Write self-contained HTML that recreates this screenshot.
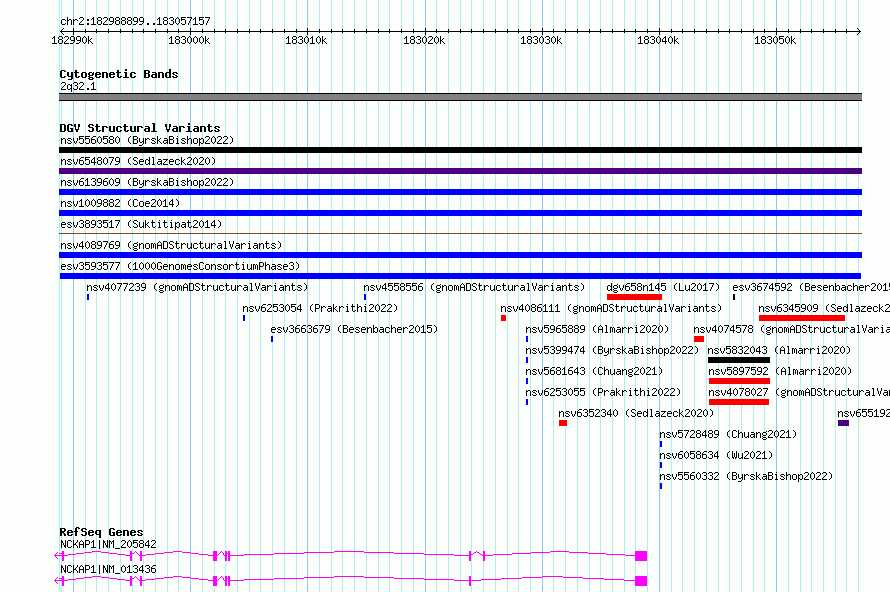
<!DOCTYPE html><html><head><meta charset="utf-8"><style>html,body{margin:0;padding:0;background:#fbfefb;overflow:hidden}svg{display:block}</style></head><body>
<svg width="890" height="592" viewBox="0 0 890 592">
<rect width="890" height="592" fill="#fbfefb"/>
<g shape-rendering="crispEdges">
<path fill="#afeeee" d="M59 0h1v592h-1zM61 0h1v592h-1z"/>
<path fill="#87ceeb" d="M73 0h1v592h-1z"/>
<path fill="#afeeee" d="M85 0h1v592h-1zM96 0h1v592h-1zM108 0h1v592h-1zM120 0h1v592h-1zM132 0h1v592h-1zM143 0h1v592h-1zM155 0h1v592h-1zM167 0h1v592h-1zM178 0h1v592h-1z"/>
<path fill="#87ceeb" d="M190 0h1v592h-1z"/>
<path fill="#afeeee" d="M202 0h1v592h-1zM214 0h1v592h-1zM225 0h1v592h-1zM237 0h1v592h-1zM249 0h1v592h-1zM260 0h1v592h-1zM272 0h1v592h-1zM284 0h1v592h-1zM296 0h1v592h-1z"/>
<path fill="#87ceeb" d="M307 0h1v592h-1z"/>
<path fill="#afeeee" d="M319 0h1v592h-1zM331 0h1v592h-1zM342 0h1v592h-1zM354 0h1v592h-1zM366 0h1v592h-1zM378 0h1v592h-1zM389 0h1v592h-1zM401 0h1v592h-1zM413 0h1v592h-1z"/>
<path fill="#87ceeb" d="M425 0h1v592h-1z"/>
<path fill="#afeeee" d="M436 0h1v592h-1zM448 0h1v592h-1zM460 0h1v592h-1zM471 0h1v592h-1zM483 0h1v592h-1zM495 0h1v592h-1zM507 0h1v592h-1zM518 0h1v592h-1zM530 0h1v592h-1z"/>
<path fill="#87ceeb" d="M542 0h1v592h-1z"/>
<path fill="#afeeee" d="M553 0h1v592h-1zM565 0h1v592h-1zM577 0h1v592h-1zM589 0h1v592h-1zM600 0h1v592h-1zM612 0h1v592h-1zM624 0h1v592h-1zM635 0h1v592h-1zM647 0h1v592h-1z"/>
<path fill="#87ceeb" d="M659 0h1v592h-1z"/>
<path fill="#afeeee" d="M671 0h1v592h-1zM682 0h1v592h-1zM694 0h1v592h-1zM706 0h1v592h-1zM718 0h1v592h-1zM729 0h1v592h-1zM741 0h1v592h-1zM753 0h1v592h-1zM764 0h1v592h-1z"/>
<path fill="#87ceeb" d="M776 0h1v592h-1z"/>
<path fill="#afeeee" d="M788 0h1v592h-1zM800 0h1v592h-1zM811 0h1v592h-1zM823 0h1v592h-1zM835 0h1v592h-1zM846 0h1v592h-1zM858 0h1v592h-1z"/>
<path fill="#000" d="M60 31h801v1h-801zM61 30h1v1h-1zM61 32h1v1h-1zM859 30h1v1h-1zM859 32h1v1h-1zM62 29h1v1h-1zM62 33h1v1h-1zM858 29h1v1h-1zM858 33h1v1h-1zM63 28h1v1h-1zM63 34h1v1h-1zM857 28h1v1h-1zM857 34h1v1h-1zM73 28h1v7h-1zM85 29h1v4h-1zM96 29h1v4h-1zM108 29h1v4h-1zM120 29h1v4h-1zM132 29h1v4h-1zM143 29h1v4h-1zM155 29h1v4h-1zM167 29h1v4h-1zM178 29h1v4h-1zM190 28h1v7h-1zM202 29h1v4h-1zM214 29h1v4h-1zM225 29h1v4h-1zM237 29h1v4h-1zM249 29h1v4h-1zM260 29h1v4h-1zM272 29h1v4h-1zM284 29h1v4h-1zM296 29h1v4h-1zM307 28h1v7h-1zM319 29h1v4h-1zM331 29h1v4h-1zM342 29h1v4h-1zM354 29h1v4h-1zM366 29h1v4h-1zM378 29h1v4h-1zM389 29h1v4h-1zM401 29h1v4h-1zM413 29h1v4h-1zM425 28h1v7h-1zM436 29h1v4h-1zM448 29h1v4h-1zM460 29h1v4h-1zM471 29h1v4h-1zM483 29h1v4h-1zM495 29h1v4h-1zM507 29h1v4h-1zM518 29h1v4h-1zM530 29h1v4h-1zM542 28h1v7h-1zM553 29h1v4h-1zM565 29h1v4h-1zM577 29h1v4h-1zM589 29h1v4h-1zM600 29h1v4h-1zM612 29h1v4h-1zM624 29h1v4h-1zM635 29h1v4h-1zM647 29h1v4h-1zM659 28h1v7h-1zM671 29h1v4h-1zM682 29h1v4h-1zM694 29h1v4h-1zM706 29h1v4h-1zM718 29h1v4h-1zM729 29h1v4h-1zM741 29h1v4h-1zM753 29h1v4h-1zM764 29h1v4h-1zM776 28h1v7h-1zM788 29h1v4h-1zM800 29h1v4h-1zM811 29h1v4h-1zM823 29h1v4h-1zM835 29h1v4h-1zM846 29h1v4h-1zM59 93h803v1h-803z"/>
<path fill="#838083" d="M59 94h803v6h-803z"/>
<path fill="#000" d="M59 100h803v1h-803zM59 147h803v6h-803z"/>
<path fill="#4b0082" d="M59 168h803v6h-803z"/>
<path fill="#0000ff" d="M59 189h803v6h-803zM59 210h803v6h-803z"/>
<path fill="#8b4513" d="M59 233h803v1h-803z"/>
<path fill="#0000ff" d="M59 252h803v6h-803zM60 273h801v6h-801zM87 294h2v6h-2zM364 294h2v6h-2z"/>
<path fill="#ff0000" d="M607 294h55v6h-55z"/>
<path fill="#000" d="M733 294h2v6h-2z"/>
<path fill="#0000ff" d="M243 315h2v6h-2z"/>
<path fill="#ff0000" d="M501 315h5v6h-5zM759 315h86v6h-86z"/>
<path fill="#0000ff" d="M271 336h2v6h-2zM526 336h2v6h-2z"/>
<path fill="#ff0000" d="M694 336h10v6h-10z"/>
<path fill="#0000ff" d="M526 357h2v6h-2z"/>
<path fill="#000" d="M708 357h62v6h-62z"/>
<path fill="#0000ff" d="M526 378h2v6h-2z"/>
<path fill="#ff0000" d="M709 378h61v6h-61z"/>
<path fill="#0000ff" d="M526 399h2v6h-2z"/>
<path fill="#ff0000" d="M709 399h60v6h-60zM559 420h8v6h-8z"/>
<path fill="#4b0082" d="M838 420h11v6h-11z"/>
<path fill="#0000ff" d="M660 441h2v6h-2zM660 462h2v6h-2zM660 483h2v6h-2z"/>
<path fill="#ff00ff" d="M54 555h1v1h-1zM54 555h1v1h-1zM55 554h1v1h-1zM55 556h1v1h-1zM56 553h1v1h-1zM56 557h1v1h-1zM57 552h1v1h-1zM57 558h1v1h-1zM54 555h8v1h-8zM59 553h3v1h-3zM227 553h1v1h-1zM62 551h2v10h-2zM130 551h2v10h-2zM140 551h2v10h-2zM213 551h4v10h-4zM225 551h2v10h-2zM228 551h2v10h-2zM469 551h2v10h-2zM483 551h2v10h-2zM635 551h12v10h-12zM63 555h1v1h-1zM64 555h1v1h-1zM65 555h1v1h-1zM66 555h1v1h-1zM67 555h1v1h-1zM68 554h1v1h-1zM69 554h1v1h-1zM70 554h1v1h-1zM71 554h1v1h-1zM72 554h1v1h-1zM73 554h1v1h-1zM74 554h1v1h-1zM75 554h1v1h-1zM76 553h1v1h-1zM77 553h1v1h-1zM78 553h1v1h-1zM79 553h1v1h-1zM80 553h1v1h-1zM81 553h1v1h-1zM82 553h1v1h-1zM83 553h1v1h-1zM84 552h1v1h-1zM85 552h1v1h-1zM86 552h1v1h-1zM87 552h1v1h-1zM88 552h1v1h-1zM89 552h1v1h-1zM90 552h1v1h-1zM91 552h1v1h-1zM92 551h1v1h-1zM93 551h1v1h-1zM94 551h1v1h-1zM95 551h1v1h-1zM96 551h1v1h-1zM96 551h1v1h-1zM97 551h1v1h-1zM98 551h1v1h-1zM99 551h1v1h-1zM100 551h1v1h-1zM101 552h1v1h-1zM102 552h1v1h-1zM103 552h1v1h-1zM104 552h1v1h-1zM105 552h1v1h-1zM106 552h1v1h-1zM107 552h1v1h-1zM108 552h1v1h-1zM109 553h1v1h-1zM110 553h1v1h-1zM111 553h1v1h-1zM112 553h1v1h-1zM113 553h1v1h-1zM114 553h1v1h-1zM115 553h1v1h-1zM116 553h1v1h-1zM117 554h1v1h-1zM118 554h1v1h-1zM119 554h1v1h-1zM120 554h1v1h-1zM121 554h1v1h-1zM122 554h1v1h-1zM123 554h1v1h-1zM124 554h1v1h-1zM125 555h1v1h-1zM126 555h1v1h-1zM127 555h1v1h-1zM128 555h1v1h-1zM129 555h1v1h-1zM130 555h1v1h-1zM131 554h1v1h-1zM132 553h1v1h-1zM133 553h1v1h-1zM134 552h1v1h-1zM135 551h1v1h-1zM135 551h1v1h-1zM136 552h1v1h-1zM137 553h1v1h-1zM138 554h1v1h-1zM139 555h1v1h-1zM141 555h1v1h-1zM142 555h1v1h-1zM143 555h1v1h-1zM144 555h1v1h-1zM145 555h1v1h-1zM146 554h1v1h-1zM147 554h1v1h-1zM148 554h1v1h-1zM149 554h1v1h-1zM150 554h1v1h-1zM151 554h1v1h-1zM152 554h1v1h-1zM153 554h1v1h-1zM154 554h1v1h-1zM155 553h1v1h-1zM156 553h1v1h-1zM157 553h1v1h-1zM158 553h1v1h-1zM159 553h1v1h-1zM160 553h1v1h-1zM161 553h1v1h-1zM162 553h1v1h-1zM163 553h1v1h-1zM164 552h1v1h-1zM165 552h1v1h-1zM166 552h1v1h-1zM167 552h1v1h-1zM168 552h1v1h-1zM169 552h1v1h-1zM170 552h1v1h-1zM171 552h1v1h-1zM172 552h1v1h-1zM173 551h1v1h-1zM174 551h1v1h-1zM175 551h1v1h-1zM176 551h1v1h-1zM177 551h1v1h-1zM177 551h1v1h-1zM178 551h1v1h-1zM179 551h1v1h-1zM180 551h1v1h-1zM181 551h1v1h-1zM182 552h1v1h-1zM183 552h1v1h-1zM184 552h1v1h-1zM185 552h1v1h-1zM186 552h1v1h-1zM187 552h1v1h-1zM188 552h1v1h-1zM189 552h1v1h-1zM190 552h1v1h-1zM191 553h1v1h-1zM192 553h1v1h-1zM193 553h1v1h-1zM194 553h1v1h-1zM195 553h1v1h-1zM196 553h1v1h-1zM197 553h1v1h-1zM198 553h1v1h-1zM199 554h1v1h-1zM200 554h1v1h-1zM201 554h1v1h-1zM202 554h1v1h-1zM203 554h1v1h-1zM204 554h1v1h-1zM205 554h1v1h-1zM206 554h1v1h-1zM207 554h1v1h-1zM208 555h1v1h-1zM209 555h1v1h-1zM210 555h1v1h-1zM211 555h1v1h-1zM212 555h1v1h-1zM217 555h1v1h-1zM218 554h1v1h-1zM219 553h1v1h-1zM220 552h1v1h-1zM221 551h1v1h-1zM221 551h1v1h-1zM222 552h1v1h-1zM223 553h1v1h-1zM223 554h1v1h-1zM224 555h1v1h-1zM229 555h1v1h-1zM230 555h1v1h-1zM231 555h1v1h-1zM232 555h1v1h-1zM233 555h1v1h-1zM234 555h1v1h-1zM235 555h1v1h-1zM236 555h1v1h-1zM237 555h1v1h-1zM238 555h1v1h-1zM239 555h1v1h-1zM240 555h1v1h-1zM241 555h1v1h-1zM242 555h1v1h-1zM243 555h1v1h-1zM244 554h1v1h-1zM245 554h1v1h-1zM246 554h1v1h-1zM247 554h1v1h-1zM248 554h1v1h-1zM249 554h1v1h-1zM250 554h1v1h-1zM251 554h1v1h-1zM252 554h1v1h-1zM253 554h1v1h-1zM254 554h1v1h-1zM255 554h1v1h-1zM256 554h1v1h-1zM257 554h1v1h-1zM258 554h1v1h-1zM259 554h1v1h-1zM260 554h1v1h-1zM261 554h1v1h-1zM262 554h1v1h-1zM263 554h1v1h-1zM264 554h1v1h-1zM265 554h1v1h-1zM266 554h1v1h-1zM267 554h1v1h-1zM268 554h1v1h-1zM269 554h1v1h-1zM270 554h1v1h-1zM271 554h1v1h-1zM272 554h1v1h-1zM273 554h1v1h-1zM274 553h1v1h-1zM275 553h1v1h-1zM276 553h1v1h-1zM277 553h1v1h-1zM278 553h1v1h-1zM279 553h1v1h-1zM280 553h1v1h-1zM281 553h1v1h-1zM282 553h1v1h-1zM283 553h1v1h-1zM284 553h1v1h-1zM285 553h1v1h-1zM286 553h1v1h-1zM287 553h1v1h-1zM288 553h1v1h-1zM289 553h1v1h-1zM290 553h1v1h-1zM291 553h1v1h-1zM292 553h1v1h-1zM293 553h1v1h-1zM294 553h1v1h-1zM295 553h1v1h-1zM296 553h1v1h-1zM297 553h1v1h-1zM298 553h1v1h-1zM299 553h1v1h-1zM300 553h1v1h-1zM301 553h1v1h-1zM302 553h1v1h-1zM303 553h1v1h-1zM304 552h1v1h-1zM305 552h1v1h-1zM306 552h1v1h-1zM307 552h1v1h-1zM308 552h1v1h-1zM309 552h1v1h-1zM310 552h1v1h-1zM311 552h1v1h-1zM312 552h1v1h-1zM313 552h1v1h-1zM314 552h1v1h-1zM315 552h1v1h-1zM316 552h1v1h-1zM317 552h1v1h-1zM318 552h1v1h-1zM319 552h1v1h-1zM320 552h1v1h-1zM321 552h1v1h-1zM322 552h1v1h-1zM323 552h1v1h-1zM324 552h1v1h-1zM325 552h1v1h-1zM326 552h1v1h-1zM327 552h1v1h-1zM328 552h1v1h-1zM329 552h1v1h-1zM330 552h1v1h-1zM331 552h1v1h-1zM332 552h1v1h-1zM333 552h1v1h-1zM334 551h1v1h-1zM335 551h1v1h-1zM336 551h1v1h-1zM337 551h1v1h-1zM338 551h1v1h-1zM339 551h1v1h-1zM340 551h1v1h-1zM341 551h1v1h-1zM342 551h1v1h-1zM343 551h1v1h-1zM344 551h1v1h-1zM345 551h1v1h-1zM346 551h1v1h-1zM347 551h1v1h-1zM348 551h1v1h-1zM349 551h1v1h-1zM349 551h1v1h-1zM350 551h1v1h-1zM351 551h1v1h-1zM352 551h1v1h-1zM353 551h1v1h-1zM354 551h1v1h-1zM355 551h1v1h-1zM356 551h1v1h-1zM357 551h1v1h-1zM358 551h1v1h-1zM359 551h1v1h-1zM360 551h1v1h-1zM361 551h1v1h-1zM362 551h1v1h-1zM363 551h1v1h-1zM364 552h1v1h-1zM365 552h1v1h-1zM366 552h1v1h-1zM367 552h1v1h-1zM368 552h1v1h-1zM369 552h1v1h-1zM370 552h1v1h-1zM371 552h1v1h-1zM372 552h1v1h-1zM373 552h1v1h-1zM374 552h1v1h-1zM375 552h1v1h-1zM376 552h1v1h-1zM377 552h1v1h-1zM378 552h1v1h-1zM379 552h1v1h-1zM380 552h1v1h-1zM381 552h1v1h-1zM382 552h1v1h-1zM383 552h1v1h-1zM384 552h1v1h-1zM385 552h1v1h-1zM386 552h1v1h-1zM387 552h1v1h-1zM388 552h1v1h-1zM389 552h1v1h-1zM390 552h1v1h-1zM391 552h1v1h-1zM392 552h1v1h-1zM393 552h1v1h-1zM394 553h1v1h-1zM395 553h1v1h-1zM396 553h1v1h-1zM397 553h1v1h-1zM398 553h1v1h-1zM399 553h1v1h-1zM400 553h1v1h-1zM401 553h1v1h-1zM402 553h1v1h-1zM403 553h1v1h-1zM404 553h1v1h-1zM405 553h1v1h-1zM406 553h1v1h-1zM407 553h1v1h-1zM408 553h1v1h-1zM409 553h1v1h-1zM410 553h1v1h-1zM411 553h1v1h-1zM412 553h1v1h-1zM413 553h1v1h-1zM414 553h1v1h-1zM415 553h1v1h-1zM416 553h1v1h-1zM417 553h1v1h-1zM418 553h1v1h-1zM419 553h1v1h-1zM420 553h1v1h-1zM421 553h1v1h-1zM422 553h1v1h-1zM423 553h1v1h-1zM424 554h1v1h-1zM425 554h1v1h-1zM426 554h1v1h-1zM427 554h1v1h-1zM428 554h1v1h-1zM429 554h1v1h-1zM430 554h1v1h-1zM431 554h1v1h-1zM432 554h1v1h-1zM433 554h1v1h-1zM434 554h1v1h-1zM435 554h1v1h-1zM436 554h1v1h-1zM437 554h1v1h-1zM438 554h1v1h-1zM439 554h1v1h-1zM440 554h1v1h-1zM441 554h1v1h-1zM442 554h1v1h-1zM443 554h1v1h-1zM444 554h1v1h-1zM445 554h1v1h-1zM446 554h1v1h-1zM447 554h1v1h-1zM448 554h1v1h-1zM449 554h1v1h-1zM450 554h1v1h-1zM451 554h1v1h-1zM452 554h1v1h-1zM453 554h1v1h-1zM454 555h1v1h-1zM455 555h1v1h-1zM456 555h1v1h-1zM457 555h1v1h-1zM458 555h1v1h-1zM459 555h1v1h-1zM460 555h1v1h-1zM461 555h1v1h-1zM462 555h1v1h-1zM463 555h1v1h-1zM464 555h1v1h-1zM465 555h1v1h-1zM466 555h1v1h-1zM467 555h1v1h-1zM468 555h1v1h-1zM470 555h1v1h-1zM471 554h1v1h-1zM472 554h1v1h-1zM473 553h1v1h-1zM474 552h1v1h-1zM475 552h1v1h-1zM476 551h1v1h-1zM476 551h1v1h-1zM477 552h1v1h-1zM478 552h1v1h-1zM479 553h1v1h-1zM480 554h1v1h-1zM481 554h1v1h-1zM482 555h1v1h-1zM483 555h1v1h-1zM484 555h1v1h-1zM485 555h1v1h-1zM486 555h1v1h-1zM487 555h1v1h-1zM488 555h1v1h-1zM489 555h1v1h-1zM490 555h1v1h-1zM491 555h1v1h-1zM492 555h1v1h-1zM493 554h1v1h-1zM494 554h1v1h-1zM495 554h1v1h-1zM496 554h1v1h-1zM497 554h1v1h-1zM498 554h1v1h-1zM499 554h1v1h-1zM500 554h1v1h-1zM501 554h1v1h-1zM502 554h1v1h-1zM503 554h1v1h-1zM504 554h1v1h-1zM505 554h1v1h-1zM506 554h1v1h-1zM507 554h1v1h-1zM508 554h1v1h-1zM509 554h1v1h-1zM510 554h1v1h-1zM511 554h1v1h-1zM512 553h1v1h-1zM513 553h1v1h-1zM514 553h1v1h-1zM515 553h1v1h-1zM516 553h1v1h-1zM517 553h1v1h-1zM518 553h1v1h-1zM519 553h1v1h-1zM520 553h1v1h-1zM521 553h1v1h-1zM522 553h1v1h-1zM523 553h1v1h-1zM524 553h1v1h-1zM525 553h1v1h-1zM526 553h1v1h-1zM527 553h1v1h-1zM528 553h1v1h-1zM529 553h1v1h-1zM530 553h1v1h-1zM531 552h1v1h-1zM532 552h1v1h-1zM533 552h1v1h-1zM534 552h1v1h-1zM535 552h1v1h-1zM536 552h1v1h-1zM537 552h1v1h-1zM538 552h1v1h-1zM539 552h1v1h-1zM540 552h1v1h-1zM541 552h1v1h-1zM542 552h1v1h-1zM543 552h1v1h-1zM544 552h1v1h-1zM545 552h1v1h-1zM546 552h1v1h-1zM547 552h1v1h-1zM548 552h1v1h-1zM549 552h1v1h-1zM550 551h1v1h-1zM551 551h1v1h-1zM552 551h1v1h-1zM553 551h1v1h-1zM554 551h1v1h-1zM555 551h1v1h-1zM556 551h1v1h-1zM557 551h1v1h-1zM558 551h1v1h-1zM559 551h1v1h-1zM559 551h1v1h-1zM560 551h1v1h-1zM561 551h1v1h-1zM562 551h1v1h-1zM563 551h1v1h-1zM564 551h1v1h-1zM565 551h1v1h-1zM566 551h1v1h-1zM567 551h1v1h-1zM568 551h1v1h-1zM569 552h1v1h-1zM570 552h1v1h-1zM571 552h1v1h-1zM572 552h1v1h-1zM573 552h1v1h-1zM574 552h1v1h-1zM575 552h1v1h-1zM576 552h1v1h-1zM577 552h1v1h-1zM578 552h1v1h-1zM579 552h1v1h-1zM580 552h1v1h-1zM581 552h1v1h-1zM582 552h1v1h-1zM583 552h1v1h-1zM584 552h1v1h-1zM585 552h1v1h-1zM586 552h1v1h-1zM587 552h1v1h-1zM588 553h1v1h-1zM589 553h1v1h-1zM590 553h1v1h-1zM591 553h1v1h-1zM592 553h1v1h-1zM593 553h1v1h-1zM594 553h1v1h-1zM595 553h1v1h-1zM596 553h1v1h-1zM597 553h1v1h-1zM598 553h1v1h-1zM599 553h1v1h-1zM600 553h1v1h-1zM601 553h1v1h-1zM602 553h1v1h-1zM603 553h1v1h-1zM604 553h1v1h-1zM605 553h1v1h-1zM606 554h1v1h-1zM607 554h1v1h-1zM608 554h1v1h-1zM609 554h1v1h-1zM610 554h1v1h-1zM611 554h1v1h-1zM612 554h1v1h-1zM613 554h1v1h-1zM614 554h1v1h-1zM615 554h1v1h-1zM616 554h1v1h-1zM617 554h1v1h-1zM618 554h1v1h-1zM619 554h1v1h-1zM620 554h1v1h-1zM621 554h1v1h-1zM622 554h1v1h-1zM623 554h1v1h-1zM624 554h1v1h-1zM625 555h1v1h-1zM626 555h1v1h-1zM627 555h1v1h-1zM628 555h1v1h-1zM629 555h1v1h-1zM630 555h1v1h-1zM631 555h1v1h-1zM632 555h1v1h-1zM633 555h1v1h-1zM634 555h1v1h-1zM54 580h1v1h-1zM54 580h1v1h-1zM55 579h1v1h-1zM55 581h1v1h-1zM56 578h1v1h-1zM56 582h1v1h-1zM57 577h1v1h-1zM57 583h1v1h-1zM54 580h8v1h-8zM59 578h3v1h-3zM227 578h1v1h-1zM62 576h2v10h-2zM130 576h2v10h-2zM140 576h2v10h-2zM213 576h4v10h-4zM225 576h2v10h-2zM228 576h2v10h-2zM469 576h2v10h-2zM635 576h12v10h-12zM63 580h1v1h-1zM64 580h1v1h-1zM65 580h1v1h-1zM66 580h1v1h-1zM67 580h1v1h-1zM68 579h1v1h-1zM69 579h1v1h-1zM70 579h1v1h-1zM71 579h1v1h-1zM72 579h1v1h-1zM73 579h1v1h-1zM74 579h1v1h-1zM75 579h1v1h-1zM76 578h1v1h-1zM77 578h1v1h-1zM78 578h1v1h-1zM79 578h1v1h-1zM80 578h1v1h-1zM81 578h1v1h-1zM82 578h1v1h-1zM83 578h1v1h-1zM84 577h1v1h-1zM85 577h1v1h-1zM86 577h1v1h-1zM87 577h1v1h-1zM88 577h1v1h-1zM89 577h1v1h-1zM90 577h1v1h-1zM91 577h1v1h-1zM92 576h1v1h-1zM93 576h1v1h-1zM94 576h1v1h-1zM95 576h1v1h-1zM96 576h1v1h-1zM96 576h1v1h-1zM97 576h1v1h-1zM98 576h1v1h-1zM99 576h1v1h-1zM100 576h1v1h-1zM101 577h1v1h-1zM102 577h1v1h-1zM103 577h1v1h-1zM104 577h1v1h-1zM105 577h1v1h-1zM106 577h1v1h-1zM107 577h1v1h-1zM108 577h1v1h-1zM109 578h1v1h-1zM110 578h1v1h-1zM111 578h1v1h-1zM112 578h1v1h-1zM113 578h1v1h-1zM114 578h1v1h-1zM115 578h1v1h-1zM116 578h1v1h-1zM117 579h1v1h-1zM118 579h1v1h-1zM119 579h1v1h-1zM120 579h1v1h-1zM121 579h1v1h-1zM122 579h1v1h-1zM123 579h1v1h-1zM124 579h1v1h-1zM125 580h1v1h-1zM126 580h1v1h-1zM127 580h1v1h-1zM128 580h1v1h-1zM129 580h1v1h-1zM130 580h1v1h-1zM131 579h1v1h-1zM132 578h1v1h-1zM133 578h1v1h-1zM134 577h1v1h-1zM135 576h1v1h-1zM135 576h1v1h-1zM136 577h1v1h-1zM137 578h1v1h-1zM138 579h1v1h-1zM139 580h1v1h-1zM141 580h1v1h-1zM142 580h1v1h-1zM143 580h1v1h-1zM144 580h1v1h-1zM145 580h1v1h-1zM146 579h1v1h-1zM147 579h1v1h-1zM148 579h1v1h-1zM149 579h1v1h-1zM150 579h1v1h-1zM151 579h1v1h-1zM152 579h1v1h-1zM153 579h1v1h-1zM154 579h1v1h-1zM155 578h1v1h-1zM156 578h1v1h-1zM157 578h1v1h-1zM158 578h1v1h-1zM159 578h1v1h-1zM160 578h1v1h-1zM161 578h1v1h-1zM162 578h1v1h-1zM163 578h1v1h-1zM164 577h1v1h-1zM165 577h1v1h-1zM166 577h1v1h-1zM167 577h1v1h-1zM168 577h1v1h-1zM169 577h1v1h-1zM170 577h1v1h-1zM171 577h1v1h-1zM172 577h1v1h-1zM173 576h1v1h-1zM174 576h1v1h-1zM175 576h1v1h-1zM176 576h1v1h-1zM177 576h1v1h-1zM177 576h1v1h-1zM178 576h1v1h-1zM179 576h1v1h-1zM180 576h1v1h-1zM181 576h1v1h-1zM182 577h1v1h-1zM183 577h1v1h-1zM184 577h1v1h-1zM185 577h1v1h-1zM186 577h1v1h-1zM187 577h1v1h-1zM188 577h1v1h-1zM189 577h1v1h-1zM190 577h1v1h-1zM191 578h1v1h-1zM192 578h1v1h-1zM193 578h1v1h-1zM194 578h1v1h-1zM195 578h1v1h-1zM196 578h1v1h-1zM197 578h1v1h-1zM198 578h1v1h-1zM199 579h1v1h-1zM200 579h1v1h-1zM201 579h1v1h-1zM202 579h1v1h-1zM203 579h1v1h-1zM204 579h1v1h-1zM205 579h1v1h-1zM206 579h1v1h-1zM207 579h1v1h-1zM208 580h1v1h-1zM209 580h1v1h-1zM210 580h1v1h-1zM211 580h1v1h-1zM212 580h1v1h-1zM217 580h1v1h-1zM218 579h1v1h-1zM219 578h1v1h-1zM220 577h1v1h-1zM221 576h1v1h-1zM221 576h1v1h-1zM222 577h1v1h-1zM223 578h1v1h-1zM223 579h1v1h-1zM224 580h1v1h-1zM229 580h1v1h-1zM230 580h1v1h-1zM231 580h1v1h-1zM232 580h1v1h-1zM233 580h1v1h-1zM234 580h1v1h-1zM235 580h1v1h-1zM236 580h1v1h-1zM237 580h1v1h-1zM238 580h1v1h-1zM239 580h1v1h-1zM240 580h1v1h-1zM241 580h1v1h-1zM242 580h1v1h-1zM243 580h1v1h-1zM244 579h1v1h-1zM245 579h1v1h-1zM246 579h1v1h-1zM247 579h1v1h-1zM248 579h1v1h-1zM249 579h1v1h-1zM250 579h1v1h-1zM251 579h1v1h-1zM252 579h1v1h-1zM253 579h1v1h-1zM254 579h1v1h-1zM255 579h1v1h-1zM256 579h1v1h-1zM257 579h1v1h-1zM258 579h1v1h-1zM259 579h1v1h-1zM260 579h1v1h-1zM261 579h1v1h-1zM262 579h1v1h-1zM263 579h1v1h-1zM264 579h1v1h-1zM265 579h1v1h-1zM266 579h1v1h-1zM267 579h1v1h-1zM268 579h1v1h-1zM269 579h1v1h-1zM270 579h1v1h-1zM271 579h1v1h-1zM272 579h1v1h-1zM273 579h1v1h-1zM274 578h1v1h-1zM275 578h1v1h-1zM276 578h1v1h-1zM277 578h1v1h-1zM278 578h1v1h-1zM279 578h1v1h-1zM280 578h1v1h-1zM281 578h1v1h-1zM282 578h1v1h-1zM283 578h1v1h-1zM284 578h1v1h-1zM285 578h1v1h-1zM286 578h1v1h-1zM287 578h1v1h-1zM288 578h1v1h-1zM289 578h1v1h-1zM290 578h1v1h-1zM291 578h1v1h-1zM292 578h1v1h-1zM293 578h1v1h-1zM294 578h1v1h-1zM295 578h1v1h-1zM296 578h1v1h-1zM297 578h1v1h-1zM298 578h1v1h-1zM299 578h1v1h-1zM300 578h1v1h-1zM301 578h1v1h-1zM302 578h1v1h-1zM303 578h1v1h-1zM304 577h1v1h-1zM305 577h1v1h-1zM306 577h1v1h-1zM307 577h1v1h-1zM308 577h1v1h-1zM309 577h1v1h-1zM310 577h1v1h-1zM311 577h1v1h-1zM312 577h1v1h-1zM313 577h1v1h-1zM314 577h1v1h-1zM315 577h1v1h-1zM316 577h1v1h-1zM317 577h1v1h-1zM318 577h1v1h-1zM319 577h1v1h-1zM320 577h1v1h-1zM321 577h1v1h-1zM322 577h1v1h-1zM323 577h1v1h-1zM324 577h1v1h-1zM325 577h1v1h-1zM326 577h1v1h-1zM327 577h1v1h-1zM328 577h1v1h-1zM329 577h1v1h-1zM330 577h1v1h-1zM331 577h1v1h-1zM332 577h1v1h-1zM333 577h1v1h-1zM334 576h1v1h-1zM335 576h1v1h-1zM336 576h1v1h-1zM337 576h1v1h-1zM338 576h1v1h-1zM339 576h1v1h-1zM340 576h1v1h-1zM341 576h1v1h-1zM342 576h1v1h-1zM343 576h1v1h-1zM344 576h1v1h-1zM345 576h1v1h-1zM346 576h1v1h-1zM347 576h1v1h-1zM348 576h1v1h-1zM349 576h1v1h-1zM349 576h1v1h-1zM350 576h1v1h-1zM351 576h1v1h-1zM352 576h1v1h-1zM353 576h1v1h-1zM354 576h1v1h-1zM355 576h1v1h-1zM356 576h1v1h-1zM357 576h1v1h-1zM358 576h1v1h-1zM359 576h1v1h-1zM360 576h1v1h-1zM361 576h1v1h-1zM362 576h1v1h-1zM363 576h1v1h-1zM364 577h1v1h-1zM365 577h1v1h-1zM366 577h1v1h-1zM367 577h1v1h-1zM368 577h1v1h-1zM369 577h1v1h-1zM370 577h1v1h-1zM371 577h1v1h-1zM372 577h1v1h-1zM373 577h1v1h-1zM374 577h1v1h-1zM375 577h1v1h-1zM376 577h1v1h-1zM377 577h1v1h-1zM378 577h1v1h-1zM379 577h1v1h-1zM380 577h1v1h-1zM381 577h1v1h-1zM382 577h1v1h-1zM383 577h1v1h-1zM384 577h1v1h-1zM385 577h1v1h-1zM386 577h1v1h-1zM387 577h1v1h-1zM388 577h1v1h-1zM389 577h1v1h-1zM390 577h1v1h-1zM391 577h1v1h-1zM392 577h1v1h-1zM393 577h1v1h-1zM394 578h1v1h-1zM395 578h1v1h-1zM396 578h1v1h-1zM397 578h1v1h-1zM398 578h1v1h-1zM399 578h1v1h-1zM400 578h1v1h-1zM401 578h1v1h-1zM402 578h1v1h-1zM403 578h1v1h-1zM404 578h1v1h-1zM405 578h1v1h-1zM406 578h1v1h-1zM407 578h1v1h-1zM408 578h1v1h-1zM409 578h1v1h-1zM410 578h1v1h-1zM411 578h1v1h-1zM412 578h1v1h-1zM413 578h1v1h-1zM414 578h1v1h-1zM415 578h1v1h-1zM416 578h1v1h-1zM417 578h1v1h-1zM418 578h1v1h-1zM419 578h1v1h-1zM420 578h1v1h-1zM421 578h1v1h-1zM422 578h1v1h-1zM423 578h1v1h-1zM424 579h1v1h-1zM425 579h1v1h-1zM426 579h1v1h-1zM427 579h1v1h-1zM428 579h1v1h-1zM429 579h1v1h-1zM430 579h1v1h-1zM431 579h1v1h-1zM432 579h1v1h-1zM433 579h1v1h-1zM434 579h1v1h-1zM435 579h1v1h-1zM436 579h1v1h-1zM437 579h1v1h-1zM438 579h1v1h-1zM439 579h1v1h-1zM440 579h1v1h-1zM441 579h1v1h-1zM442 579h1v1h-1zM443 579h1v1h-1zM444 579h1v1h-1zM445 579h1v1h-1zM446 579h1v1h-1zM447 579h1v1h-1zM448 579h1v1h-1zM449 579h1v1h-1zM450 579h1v1h-1zM451 579h1v1h-1zM452 579h1v1h-1zM453 579h1v1h-1zM454 580h1v1h-1zM455 580h1v1h-1zM456 580h1v1h-1zM457 580h1v1h-1zM458 580h1v1h-1zM459 580h1v1h-1zM460 580h1v1h-1zM461 580h1v1h-1zM462 580h1v1h-1zM463 580h1v1h-1zM464 580h1v1h-1zM465 580h1v1h-1zM466 580h1v1h-1zM467 580h1v1h-1zM468 580h1v1h-1zM470 580h1v1h-1zM471 580h1v1h-1zM472 580h1v1h-1zM473 580h1v1h-1zM474 580h1v1h-1zM475 580h1v1h-1zM476 580h1v1h-1zM477 580h1v1h-1zM478 580h1v1h-1zM479 580h1v1h-1zM480 580h1v1h-1zM481 579h1v1h-1zM482 579h1v1h-1zM483 579h1v1h-1zM484 579h1v1h-1zM485 579h1v1h-1zM486 579h1v1h-1zM487 579h1v1h-1zM488 579h1v1h-1zM489 579h1v1h-1zM490 579h1v1h-1zM491 579h1v1h-1zM492 579h1v1h-1zM493 579h1v1h-1zM494 579h1v1h-1zM495 579h1v1h-1zM496 579h1v1h-1zM497 579h1v1h-1zM498 579h1v1h-1zM499 579h1v1h-1zM500 579h1v1h-1zM501 578h1v1h-1zM502 578h1v1h-1zM503 578h1v1h-1zM504 578h1v1h-1zM505 578h1v1h-1zM506 578h1v1h-1zM507 578h1v1h-1zM508 578h1v1h-1zM509 578h1v1h-1zM510 578h1v1h-1zM511 578h1v1h-1zM512 578h1v1h-1zM513 578h1v1h-1zM514 578h1v1h-1zM515 578h1v1h-1zM516 578h1v1h-1zM517 578h1v1h-1zM518 578h1v1h-1zM519 578h1v1h-1zM520 578h1v1h-1zM521 578h1v1h-1zM522 577h1v1h-1zM523 577h1v1h-1zM524 577h1v1h-1zM525 577h1v1h-1zM526 577h1v1h-1zM527 577h1v1h-1zM528 577h1v1h-1zM529 577h1v1h-1zM530 577h1v1h-1zM531 577h1v1h-1zM532 577h1v1h-1zM533 577h1v1h-1zM534 577h1v1h-1zM535 577h1v1h-1zM536 577h1v1h-1zM537 577h1v1h-1zM538 577h1v1h-1zM539 577h1v1h-1zM540 577h1v1h-1zM541 577h1v1h-1zM542 576h1v1h-1zM543 576h1v1h-1zM544 576h1v1h-1zM545 576h1v1h-1zM546 576h1v1h-1zM547 576h1v1h-1zM548 576h1v1h-1zM549 576h1v1h-1zM550 576h1v1h-1zM551 576h1v1h-1zM552 576h1v1h-1zM552 576h1v1h-1zM553 576h1v1h-1zM554 576h1v1h-1zM555 576h1v1h-1zM556 576h1v1h-1zM557 576h1v1h-1zM558 576h1v1h-1zM559 576h1v1h-1zM560 576h1v1h-1zM561 576h1v1h-1zM562 576h1v1h-1zM563 577h1v1h-1zM564 577h1v1h-1zM565 577h1v1h-1zM566 577h1v1h-1zM567 577h1v1h-1zM568 577h1v1h-1zM569 577h1v1h-1zM570 577h1v1h-1zM571 577h1v1h-1zM572 577h1v1h-1zM573 577h1v1h-1zM574 577h1v1h-1zM575 577h1v1h-1zM576 577h1v1h-1zM577 577h1v1h-1zM578 577h1v1h-1zM579 577h1v1h-1zM580 577h1v1h-1zM581 577h1v1h-1zM582 577h1v1h-1zM583 578h1v1h-1zM584 578h1v1h-1zM585 578h1v1h-1zM586 578h1v1h-1zM587 578h1v1h-1zM588 578h1v1h-1zM589 578h1v1h-1zM590 578h1v1h-1zM591 578h1v1h-1zM592 578h1v1h-1zM593 578h1v1h-1zM594 578h1v1h-1zM595 578h1v1h-1zM596 578h1v1h-1zM597 578h1v1h-1zM598 578h1v1h-1zM599 578h1v1h-1zM600 578h1v1h-1zM601 578h1v1h-1zM602 578h1v1h-1zM603 578h1v1h-1zM604 579h1v1h-1zM605 579h1v1h-1zM606 579h1v1h-1zM607 579h1v1h-1zM608 579h1v1h-1zM609 579h1v1h-1zM610 579h1v1h-1zM611 579h1v1h-1zM612 579h1v1h-1zM613 579h1v1h-1zM614 579h1v1h-1zM615 579h1v1h-1zM616 579h1v1h-1zM617 579h1v1h-1zM618 579h1v1h-1zM619 579h1v1h-1zM620 579h1v1h-1zM621 579h1v1h-1zM622 579h1v1h-1zM623 579h1v1h-1zM624 580h1v1h-1zM625 580h1v1h-1zM626 580h1v1h-1zM627 580h1v1h-1zM628 580h1v1h-1zM629 580h1v1h-1zM630 580h1v1h-1zM631 580h1v1h-1zM632 580h1v1h-1zM633 580h1v1h-1zM634 580h1v1h-1z"/>
</g>
<defs>
<path id="r0" d="M3 3h1v1h-1zM2 4h1v1h-1zM1 5h1v1h-1zM1 6h1v1h-1zM1 7h1v1h-1zM1 8h1v1h-1zM2 9h1v1h-1zM3 10h1v1h-1z"/>
<path id="r1" d="M1 3h1v1h-1zM2 4h1v1h-1zM3 5h1v1h-1zM3 6h1v1h-1zM3 7h1v1h-1zM3 8h1v1h-1zM2 9h1v1h-1zM1 10h1v1h-1z"/>
<path id="r2" d="M2 9h2v1h-2zM2 10h2v1h-2z"/>
<path id="r3" d="M2 3h1v1h-1zM1 4h1v1h-1zM3 4h1v1h-1zM0 5h1v1h-1zM4 5h1v1h-1zM0 6h1v1h-1zM4 6h1v1h-1zM0 7h1v1h-1zM4 7h1v1h-1zM0 8h1v1h-1zM4 8h1v1h-1zM1 9h1v1h-1zM3 9h1v1h-1zM2 10h1v1h-1z"/>
<path id="r4" d="M2 3h1v1h-1zM1 4h2v1h-2zM0 5h1v1h-1zM2 5h1v1h-1zM2 6h1v1h-1zM2 7h1v1h-1zM2 8h1v1h-1zM2 9h1v1h-1zM0 10h5v1h-5z"/>
<path id="r5" d="M1 3h3v1h-3zM0 4h1v1h-1zM4 4h1v1h-1zM4 5h1v1h-1zM3 6h1v1h-1zM2 7h1v1h-1zM1 8h1v1h-1zM0 9h1v1h-1zM0 10h5v1h-5z"/>
<path id="r6" d="M1 3h3v1h-3zM0 4h1v1h-1zM4 4h1v1h-1zM4 5h1v1h-1zM2 6h2v1h-2zM4 7h1v1h-1zM4 8h1v1h-1zM0 9h1v1h-1zM4 9h1v1h-1zM1 10h3v1h-3z"/>
<path id="r7" d="M3 3h1v1h-1zM2 4h2v1h-2zM1 5h1v1h-1zM3 5h1v1h-1zM0 6h1v1h-1zM3 6h1v1h-1zM0 7h1v1h-1zM3 7h1v1h-1zM0 8h5v1h-5zM3 9h1v1h-1zM3 10h1v1h-1z"/>
<path id="r8" d="M0 3h5v1h-5zM0 4h1v1h-1zM0 5h4v1h-4zM0 6h1v1h-1zM4 6h1v1h-1zM4 7h1v1h-1zM4 8h1v1h-1zM0 9h1v1h-1zM4 9h1v1h-1zM1 10h3v1h-3z"/>
<path id="r9" d="M2 3h3v1h-3zM1 4h1v1h-1zM0 5h1v1h-1zM0 6h4v1h-4zM0 7h1v1h-1zM4 7h1v1h-1zM0 8h1v1h-1zM4 8h1v1h-1zM0 9h1v1h-1zM4 9h1v1h-1zM1 10h3v1h-3z"/>
<path id="r10" d="M0 3h5v1h-5zM4 4h1v1h-1zM3 5h1v1h-1zM3 6h1v1h-1zM2 7h1v1h-1zM2 8h1v1h-1zM1 9h1v1h-1zM1 10h1v1h-1z"/>
<path id="r11" d="M1 3h3v1h-3zM0 4h1v1h-1zM4 4h1v1h-1zM0 5h1v1h-1zM4 5h1v1h-1zM1 6h3v1h-3zM0 7h1v1h-1zM4 7h1v1h-1zM0 8h1v1h-1zM4 8h1v1h-1zM0 9h1v1h-1zM4 9h1v1h-1zM1 10h3v1h-3z"/>
<path id="r12" d="M1 3h3v1h-3zM0 4h1v1h-1zM4 4h1v1h-1zM0 5h1v1h-1zM4 5h1v1h-1zM0 6h1v1h-1zM4 6h1v1h-1zM1 7h4v1h-4zM4 8h1v1h-1zM3 9h1v1h-1zM0 10h3v1h-3z"/>
<path id="r13" d="M2 5h2v1h-2zM2 6h2v1h-2zM2 9h2v1h-2zM2 10h2v1h-2z"/>
<path id="r14" d="M2 3h1v1h-1zM1 4h1v1h-1zM3 4h1v1h-1zM0 5h1v1h-1zM4 5h1v1h-1zM0 6h1v1h-1zM4 6h1v1h-1zM0 7h5v1h-5zM0 8h1v1h-1zM4 8h1v1h-1zM0 9h1v1h-1zM4 9h1v1h-1zM0 10h1v1h-1zM4 10h1v1h-1z"/>
<path id="r15" d="M0 3h4v1h-4zM0 4h1v1h-1zM4 4h1v1h-1zM0 5h1v1h-1zM4 5h1v1h-1zM0 6h4v1h-4zM0 7h1v1h-1zM4 7h1v1h-1zM0 8h1v1h-1zM4 8h1v1h-1zM0 9h1v1h-1zM4 9h1v1h-1zM0 10h4v1h-4z"/>
<path id="b16" d="M0 3h5v1h-5zM0 4h2v1h-2zM4 4h2v1h-2zM0 5h2v1h-2zM4 5h2v1h-2zM0 6h5v1h-5zM0 7h2v1h-2zM4 7h2v1h-2zM0 8h2v1h-2zM4 8h2v1h-2zM0 9h2v1h-2zM4 9h2v1h-2zM0 10h5v1h-5z"/>
<path id="r17" d="M1 3h3v1h-3zM0 4h1v1h-1zM4 4h1v1h-1zM0 5h1v1h-1zM0 6h1v1h-1zM0 7h1v1h-1zM0 8h1v1h-1zM0 9h1v1h-1zM4 9h1v1h-1zM1 10h3v1h-3z"/>
<path id="b18" d="M1 3h4v1h-4zM0 4h2v1h-2zM4 4h2v1h-2zM0 5h2v1h-2zM0 6h2v1h-2zM0 7h2v1h-2zM0 8h2v1h-2zM0 9h2v1h-2zM4 9h2v1h-2zM1 10h4v1h-4z"/>
<path id="r19" d="M0 3h4v1h-4zM0 4h1v1h-1zM4 4h1v1h-1zM0 5h1v1h-1zM4 5h1v1h-1zM0 6h1v1h-1zM4 6h1v1h-1zM0 7h1v1h-1zM4 7h1v1h-1zM0 8h1v1h-1zM4 8h1v1h-1zM0 9h1v1h-1zM4 9h1v1h-1zM0 10h4v1h-4z"/>
<path id="b20" d="M0 3h5v1h-5zM0 4h2v1h-2zM4 4h2v1h-2zM0 5h2v1h-2zM4 5h2v1h-2zM0 6h2v1h-2zM4 6h2v1h-2zM0 7h2v1h-2zM4 7h2v1h-2zM0 8h2v1h-2zM4 8h2v1h-2zM0 9h2v1h-2zM4 9h2v1h-2zM0 10h5v1h-5z"/>
<path id="r21" d="M1 3h3v1h-3zM0 4h1v1h-1zM4 4h1v1h-1zM0 5h1v1h-1zM0 6h1v1h-1zM0 7h1v1h-1zM3 7h2v1h-2zM0 8h1v1h-1zM4 8h1v1h-1zM0 9h1v1h-1zM4 9h1v1h-1zM1 10h3v1h-3z"/>
<path id="b22" d="M1 3h4v1h-4zM0 4h2v1h-2zM4 4h2v1h-2zM0 5h2v1h-2zM0 6h2v1h-2zM0 7h2v1h-2zM3 7h3v1h-3zM0 8h2v1h-2zM4 8h2v1h-2zM0 9h2v1h-2zM4 9h2v1h-2zM1 10h5v1h-5z"/>
<path id="r23" d="M0 3h1v1h-1zM4 3h1v1h-1zM0 4h1v1h-1zM4 4h1v1h-1zM0 5h1v1h-1zM3 5h1v1h-1zM0 6h1v1h-1zM2 6h1v1h-1zM0 7h3v1h-3zM0 8h1v1h-1zM3 8h1v1h-1zM0 9h1v1h-1zM4 9h1v1h-1zM0 10h1v1h-1zM4 10h1v1h-1z"/>
<path id="r24" d="M0 3h1v1h-1zM0 4h1v1h-1zM0 5h1v1h-1zM0 6h1v1h-1zM0 7h1v1h-1zM0 8h1v1h-1zM0 9h1v1h-1zM0 10h5v1h-5z"/>
<path id="r25" d="M0 3h1v1h-1zM4 3h1v1h-1zM0 4h2v1h-2zM3 4h2v1h-2zM0 5h1v1h-1zM2 5h1v1h-1zM4 5h1v1h-1zM0 6h1v1h-1zM2 6h1v1h-1zM4 6h1v1h-1zM0 7h1v1h-1zM4 7h1v1h-1zM0 8h1v1h-1zM4 8h1v1h-1zM0 9h1v1h-1zM4 9h1v1h-1zM0 10h1v1h-1zM4 10h1v1h-1z"/>
<path id="r26" d="M0 3h1v1h-1zM4 3h1v1h-1zM0 4h2v1h-2zM4 4h1v1h-1zM0 5h2v1h-2zM4 5h1v1h-1zM0 6h1v1h-1zM2 6h1v1h-1zM4 6h1v1h-1zM0 7h1v1h-1zM2 7h1v1h-1zM4 7h1v1h-1zM0 8h1v1h-1zM3 8h2v1h-2zM0 9h1v1h-1zM3 9h2v1h-2zM0 10h1v1h-1zM4 10h1v1h-1z"/>
<path id="r27" d="M0 3h4v1h-4zM0 4h1v1h-1zM4 4h1v1h-1zM0 5h1v1h-1zM4 5h1v1h-1zM0 6h1v1h-1zM4 6h1v1h-1zM0 7h4v1h-4zM0 8h1v1h-1zM0 9h1v1h-1zM0 10h1v1h-1z"/>
<path id="b28" d="M0 3h5v1h-5zM0 4h2v1h-2zM4 4h2v1h-2zM0 5h2v1h-2zM4 5h2v1h-2zM0 6h5v1h-5zM0 7h4v1h-4zM0 8h2v1h-2zM3 8h2v1h-2zM0 9h2v1h-2zM4 9h2v1h-2zM0 10h2v1h-2zM4 10h2v1h-2z"/>
<path id="r29" d="M1 3h3v1h-3zM0 4h1v1h-1zM4 4h1v1h-1zM0 5h1v1h-1zM1 6h2v1h-2zM3 7h1v1h-1zM4 8h1v1h-1zM0 9h1v1h-1zM4 9h1v1h-1zM1 10h3v1h-3z"/>
<path id="b30" d="M1 3h4v1h-4zM0 4h2v1h-2zM4 4h2v1h-2zM0 5h2v1h-2zM1 6h4v1h-4zM4 7h2v1h-2zM4 8h2v1h-2zM0 9h2v1h-2zM4 9h2v1h-2zM1 10h4v1h-4z"/>
<path id="r31" d="M0 3h1v1h-1zM4 3h1v1h-1zM0 4h1v1h-1zM4 4h1v1h-1zM0 5h1v1h-1zM4 5h1v1h-1zM1 6h1v1h-1zM3 6h1v1h-1zM1 7h1v1h-1zM3 7h1v1h-1zM1 8h1v1h-1zM3 8h1v1h-1zM2 9h1v1h-1zM2 10h1v1h-1z"/>
<path id="b32" d="M0 3h2v1h-2zM4 3h2v1h-2zM0 4h2v1h-2zM4 4h2v1h-2zM0 5h2v1h-2zM4 5h2v1h-2zM1 6h1v1h-1zM4 6h1v1h-1zM1 7h1v1h-1zM4 7h1v1h-1zM1 8h4v1h-4zM2 9h2v1h-2zM2 10h2v1h-2z"/>
<path id="r33" d="M0 3h1v1h-1zM4 3h1v1h-1zM0 4h1v1h-1zM4 4h1v1h-1zM0 5h1v1h-1zM2 5h1v1h-1zM4 5h1v1h-1zM0 6h1v1h-1zM2 6h1v1h-1zM4 6h1v1h-1zM0 7h1v1h-1zM2 7h1v1h-1zM4 7h1v1h-1zM0 8h1v1h-1zM2 8h1v1h-1zM4 8h1v1h-1zM0 9h2v1h-2zM3 9h2v1h-2zM1 10h1v1h-1zM3 10h1v1h-1z"/>
<path id="r34" d="M0 11h5v1h-5z"/>
<path id="r35" d="M1 5h3v1h-3zM4 6h1v1h-1zM1 7h4v1h-4zM0 8h1v1h-1zM4 8h1v1h-1zM0 9h1v1h-1zM3 9h2v1h-2zM1 10h2v1h-2zM4 10h1v1h-1z"/>
<path id="b36" d="M1 5h4v1h-4zM4 6h2v1h-2zM1 7h5v1h-5zM0 8h2v1h-2zM4 8h2v1h-2zM0 9h2v1h-2zM4 9h2v1h-2zM1 10h5v1h-5z"/>
<path id="r37" d="M0 3h1v1h-1zM0 4h1v1h-1zM0 5h1v1h-1zM2 5h2v1h-2zM0 6h2v1h-2zM4 6h1v1h-1zM0 7h1v1h-1zM4 7h1v1h-1zM0 8h1v1h-1zM4 8h1v1h-1zM0 9h2v1h-2zM4 9h1v1h-1zM0 10h1v1h-1zM2 10h2v1h-2z"/>
<path id="r38" d="M1 5h3v1h-3zM0 6h1v1h-1zM4 6h1v1h-1zM0 7h1v1h-1zM0 8h1v1h-1zM0 9h1v1h-1zM4 9h1v1h-1zM1 10h3v1h-3z"/>
<path id="b39" d="M1 5h4v1h-4zM0 6h2v1h-2zM4 6h2v1h-2zM0 7h2v1h-2zM0 8h2v1h-2zM0 9h2v1h-2zM4 9h2v1h-2zM1 10h4v1h-4z"/>
<path id="r40" d="M4 3h1v1h-1zM4 4h1v1h-1zM1 5h2v1h-2zM4 5h1v1h-1zM0 6h1v1h-1zM3 6h2v1h-2zM0 7h1v1h-1zM4 7h1v1h-1zM0 8h1v1h-1zM4 8h1v1h-1zM0 9h1v1h-1zM3 9h2v1h-2zM1 10h2v1h-2zM4 10h1v1h-1z"/>
<path id="b41" d="M4 2h2v1h-2zM4 3h2v1h-2zM4 4h2v1h-2zM1 5h5v1h-5zM0 6h2v1h-2zM4 6h2v1h-2zM0 7h2v1h-2zM4 7h2v1h-2zM0 8h2v1h-2zM4 8h2v1h-2zM0 9h2v1h-2zM4 9h2v1h-2zM1 10h5v1h-5z"/>
<path id="r42" d="M1 5h3v1h-3zM0 6h1v1h-1zM4 6h1v1h-1zM0 7h5v1h-5zM0 8h1v1h-1zM0 9h1v1h-1zM1 10h3v1h-3z"/>
<path id="b43" d="M1 5h4v1h-4zM0 6h2v1h-2zM4 6h2v1h-2zM0 7h6v1h-6zM0 8h2v1h-2zM0 9h2v1h-2zM4 9h2v1h-2zM1 10h4v1h-4z"/>
<path id="b44" d="M2 2h3v1h-3zM1 3h2v1h-2zM4 3h2v1h-2zM1 4h2v1h-2zM1 5h2v1h-2zM0 6h4v1h-4zM1 7h2v1h-2zM1 8h2v1h-2zM1 9h2v1h-2zM1 10h2v1h-2z"/>
<path id="r45" d="M4 4h1v1h-1zM1 5h3v1h-3zM0 6h1v1h-1zM4 6h1v1h-1zM0 7h1v1h-1zM4 7h1v1h-1zM1 8h3v1h-3zM0 9h1v1h-1zM1 10h3v1h-3zM0 11h1v1h-1zM4 11h1v1h-1zM1 12h3v1h-3z"/>
<path id="b46" d="M1 5h3v1h-3zM5 5h1v1h-1zM0 6h2v1h-2zM4 6h2v1h-2zM0 7h2v1h-2zM4 7h2v1h-2zM1 8h4v1h-4zM0 9h2v1h-2zM1 10h4v1h-4zM0 11h2v1h-2zM4 11h2v1h-2zM1 12h4v1h-4z"/>
<path id="r47" d="M0 3h1v1h-1zM0 4h1v1h-1zM0 5h1v1h-1zM2 5h2v1h-2zM0 6h2v1h-2zM4 6h1v1h-1zM0 7h1v1h-1zM4 7h1v1h-1zM0 8h1v1h-1zM4 8h1v1h-1zM0 9h1v1h-1zM4 9h1v1h-1zM0 10h1v1h-1zM4 10h1v1h-1z"/>
<path id="r48" d="M2 3h1v1h-1zM1 5h2v1h-2zM2 6h1v1h-1zM2 7h1v1h-1zM2 8h1v1h-1zM2 9h1v1h-1zM1 10h3v1h-3z"/>
<path id="b49" d="M2 2h2v1h-2zM2 3h2v1h-2zM1 5h3v1h-3zM2 6h2v1h-2zM2 7h2v1h-2zM2 8h2v1h-2zM2 9h2v1h-2zM0 10h6v1h-6z"/>
<path id="r50" d="M0 3h1v1h-1zM0 4h1v1h-1zM0 5h1v1h-1zM3 5h1v1h-1zM0 6h1v1h-1zM2 6h1v1h-1zM0 7h2v1h-2zM0 8h1v1h-1zM2 8h1v1h-1zM0 9h1v1h-1zM3 9h1v1h-1zM0 10h1v1h-1zM4 10h1v1h-1z"/>
<path id="r51" d="M1 3h2v1h-2zM2 4h1v1h-1zM2 5h1v1h-1zM2 6h1v1h-1zM2 7h1v1h-1zM2 8h1v1h-1zM2 9h1v1h-1zM1 10h3v1h-3z"/>
<path id="b52" d="M1 2h3v1h-3zM2 3h2v1h-2zM2 4h2v1h-2zM2 5h2v1h-2zM2 6h2v1h-2zM2 7h2v1h-2zM2 8h2v1h-2zM2 9h2v1h-2zM0 10h6v1h-6z"/>
<path id="r53" d="M0 5h2v1h-2zM3 5h1v1h-1zM0 6h1v1h-1zM2 6h1v1h-1zM4 6h1v1h-1zM0 7h1v1h-1zM2 7h1v1h-1zM4 7h1v1h-1zM0 8h1v1h-1zM2 8h1v1h-1zM4 8h1v1h-1zM0 9h1v1h-1zM2 9h1v1h-1zM4 9h1v1h-1zM0 10h1v1h-1zM4 10h1v1h-1z"/>
<path id="r54" d="M0 5h1v1h-1zM2 5h2v1h-2zM0 6h2v1h-2zM4 6h1v1h-1zM0 7h1v1h-1zM4 7h1v1h-1zM0 8h1v1h-1zM4 8h1v1h-1zM0 9h1v1h-1zM4 9h1v1h-1zM0 10h1v1h-1zM4 10h1v1h-1z"/>
<path id="b55" d="M0 5h5v1h-5zM0 6h2v1h-2zM4 6h2v1h-2zM0 7h2v1h-2zM4 7h2v1h-2zM0 8h2v1h-2zM4 8h2v1h-2zM0 9h2v1h-2zM4 9h2v1h-2zM0 10h2v1h-2zM4 10h2v1h-2z"/>
<path id="r56" d="M1 5h3v1h-3zM0 6h1v1h-1zM4 6h1v1h-1zM0 7h1v1h-1zM4 7h1v1h-1zM0 8h1v1h-1zM4 8h1v1h-1zM0 9h1v1h-1zM4 9h1v1h-1zM1 10h3v1h-3z"/>
<path id="b57" d="M1 5h4v1h-4zM0 6h2v1h-2zM4 6h2v1h-2zM0 7h2v1h-2zM4 7h2v1h-2zM0 8h2v1h-2zM4 8h2v1h-2zM0 9h2v1h-2zM4 9h2v1h-2zM1 10h4v1h-4z"/>
<path id="r58" d="M0 5h1v1h-1zM2 5h2v1h-2zM0 6h2v1h-2zM4 6h1v1h-1zM0 7h1v1h-1zM4 7h1v1h-1zM0 8h1v1h-1zM4 8h1v1h-1zM0 9h2v1h-2zM4 9h1v1h-1zM0 10h1v1h-1zM2 10h2v1h-2zM0 11h1v1h-1zM0 12h1v1h-1z"/>
<path id="r59" d="M1 5h2v1h-2zM4 5h1v1h-1zM0 6h1v1h-1zM3 6h2v1h-2zM0 7h1v1h-1zM4 7h1v1h-1zM0 8h1v1h-1zM4 8h1v1h-1zM0 9h1v1h-1zM3 9h2v1h-2zM1 10h2v1h-2zM4 10h1v1h-1zM4 11h1v1h-1zM4 12h1v1h-1z"/>
<path id="b60" d="M1 5h5v1h-5zM0 6h2v1h-2zM4 6h2v1h-2zM0 7h2v1h-2zM4 7h2v1h-2zM0 8h2v1h-2zM4 8h2v1h-2zM1 9h5v1h-5zM4 10h2v1h-2zM4 11h2v1h-2zM4 12h2v1h-2z"/>
<path id="r61" d="M0 5h1v1h-1zM2 5h2v1h-2zM0 6h2v1h-2zM4 6h1v1h-1zM0 7h1v1h-1zM0 8h1v1h-1zM0 9h1v1h-1zM0 10h1v1h-1z"/>
<path id="b62" d="M0 5h5v1h-5zM0 6h2v1h-2zM4 6h2v1h-2zM0 7h2v1h-2zM0 8h2v1h-2zM0 9h2v1h-2zM0 10h2v1h-2z"/>
<path id="r63" d="M1 5h3v1h-3zM0 6h1v1h-1zM4 6h1v1h-1zM1 7h2v1h-2zM3 8h1v1h-1zM0 9h1v1h-1zM4 9h1v1h-1zM1 10h3v1h-3z"/>
<path id="b64" d="M1 5h4v1h-4zM0 6h2v1h-2zM4 6h2v1h-2zM1 7h2v1h-2zM3 8h2v1h-2zM0 9h2v1h-2zM4 9h2v1h-2zM1 10h4v1h-4z"/>
<path id="r65" d="M1 3h1v1h-1zM1 4h1v1h-1zM0 5h4v1h-4zM1 6h1v1h-1zM1 7h1v1h-1zM1 8h1v1h-1zM1 9h1v1h-1zM4 9h1v1h-1zM2 10h2v1h-2z"/>
<path id="b66" d="M1 3h2v1h-2zM1 4h2v1h-2zM0 5h5v1h-5zM1 6h2v1h-2zM1 7h2v1h-2zM1 8h2v1h-2zM1 9h2v1h-2zM4 9h2v1h-2zM2 10h3v1h-3z"/>
<path id="r67" d="M0 5h1v1h-1zM4 5h1v1h-1zM0 6h1v1h-1zM4 6h1v1h-1zM0 7h1v1h-1zM4 7h1v1h-1zM0 8h1v1h-1zM4 8h1v1h-1zM0 9h1v1h-1zM3 9h2v1h-2zM1 10h2v1h-2zM4 10h1v1h-1z"/>
<path id="b68" d="M0 5h2v1h-2zM4 5h2v1h-2zM0 6h2v1h-2zM4 6h2v1h-2zM0 7h2v1h-2zM4 7h2v1h-2zM0 8h2v1h-2zM4 8h2v1h-2zM0 9h2v1h-2zM4 9h2v1h-2zM1 10h5v1h-5z"/>
<path id="r69" d="M0 5h1v1h-1zM4 5h1v1h-1zM0 6h1v1h-1zM4 6h1v1h-1zM0 7h1v1h-1zM4 7h1v1h-1zM1 8h1v1h-1zM3 8h1v1h-1zM1 9h1v1h-1zM3 9h1v1h-1zM2 10h1v1h-1z"/>
<path id="r70" d="M0 5h1v1h-1zM4 5h1v1h-1zM0 6h1v1h-1zM4 6h1v1h-1zM0 7h1v1h-1zM4 7h1v1h-1zM0 8h1v1h-1zM3 8h2v1h-2zM1 9h2v1h-2zM4 9h1v1h-1zM4 10h1v1h-1zM3 11h1v1h-1zM0 12h3v1h-3z"/>
<path id="b71" d="M0 5h2v1h-2zM4 5h2v1h-2zM0 6h2v1h-2zM4 6h2v1h-2zM0 7h2v1h-2zM4 7h2v1h-2zM0 8h2v1h-2zM4 8h2v1h-2zM1 9h5v1h-5zM4 10h2v1h-2zM4 11h2v1h-2zM1 12h4v1h-4z"/>
<path id="r72" d="M0 5h5v1h-5zM3 6h1v1h-1zM2 7h1v1h-1zM1 8h1v1h-1zM0 9h1v1h-1zM0 10h5v1h-5z"/>
<path id="r73" d="M2 3h1v1h-1zM2 4h1v1h-1zM2 5h1v1h-1zM2 6h1v1h-1zM2 7h1v1h-1zM2 8h1v1h-1zM2 9h1v1h-1zM2 10h1v1h-1zM2 11h1v1h-1z"/>
</defs>
<g fill="#000" shape-rendering="crispEdges">
<use href="#r38" x="61" y="14"/>
<use href="#r47" x="67" y="14"/>
<use href="#r61" x="73" y="14"/>
<use href="#r5" x="79" y="14"/>
<use href="#r13" x="85" y="14"/>
<use href="#r4" x="91" y="14"/>
<use href="#r11" x="97" y="14"/>
<use href="#r5" x="103" y="14"/>
<use href="#r12" x="109" y="14"/>
<use href="#r11" x="115" y="14"/>
<use href="#r11" x="121" y="14"/>
<use href="#r11" x="127" y="14"/>
<use href="#r12" x="133" y="14"/>
<use href="#r12" x="139" y="14"/>
<use href="#r2" x="145" y="14"/>
<use href="#r2" x="151" y="14"/>
<use href="#r4" x="157" y="14"/>
<use href="#r11" x="163" y="14"/>
<use href="#r6" x="169" y="14"/>
<use href="#r3" x="175" y="14"/>
<use href="#r8" x="181" y="14"/>
<use href="#r10" x="187" y="14"/>
<use href="#r4" x="193" y="14"/>
<use href="#r8" x="199" y="14"/>
<use href="#r10" x="205" y="14"/>
<use href="#r4" x="52" y="33"/>
<use href="#r11" x="58" y="33"/>
<use href="#r5" x="64" y="33"/>
<use href="#r12" x="70" y="33"/>
<use href="#r12" x="76" y="33"/>
<use href="#r3" x="82" y="33"/>
<use href="#r50" x="88" y="33"/>
<use href="#r4" x="169" y="33"/>
<use href="#r11" x="175" y="33"/>
<use href="#r6" x="181" y="33"/>
<use href="#r3" x="187" y="33"/>
<use href="#r3" x="193" y="33"/>
<use href="#r3" x="199" y="33"/>
<use href="#r50" x="205" y="33"/>
<use href="#r4" x="286" y="33"/>
<use href="#r11" x="292" y="33"/>
<use href="#r6" x="298" y="33"/>
<use href="#r3" x="304" y="33"/>
<use href="#r4" x="310" y="33"/>
<use href="#r3" x="316" y="33"/>
<use href="#r50" x="322" y="33"/>
<use href="#r4" x="404" y="33"/>
<use href="#r11" x="410" y="33"/>
<use href="#r6" x="416" y="33"/>
<use href="#r3" x="422" y="33"/>
<use href="#r5" x="428" y="33"/>
<use href="#r3" x="434" y="33"/>
<use href="#r50" x="440" y="33"/>
<use href="#r4" x="521" y="33"/>
<use href="#r11" x="527" y="33"/>
<use href="#r6" x="533" y="33"/>
<use href="#r3" x="539" y="33"/>
<use href="#r6" x="545" y="33"/>
<use href="#r3" x="551" y="33"/>
<use href="#r50" x="557" y="33"/>
<use href="#r4" x="638" y="33"/>
<use href="#r11" x="644" y="33"/>
<use href="#r6" x="650" y="33"/>
<use href="#r3" x="656" y="33"/>
<use href="#r7" x="662" y="33"/>
<use href="#r3" x="668" y="33"/>
<use href="#r50" x="674" y="33"/>
<use href="#r4" x="755" y="33"/>
<use href="#r11" x="761" y="33"/>
<use href="#r6" x="767" y="33"/>
<use href="#r3" x="773" y="33"/>
<use href="#r8" x="779" y="33"/>
<use href="#r3" x="785" y="33"/>
<use href="#r50" x="791" y="33"/>
<use href="#b18" x="60" y="67"/>
<use href="#b71" x="67" y="67"/>
<use href="#b66" x="74" y="67"/>
<use href="#b57" x="81" y="67"/>
<use href="#b46" x="88" y="67"/>
<use href="#b43" x="95" y="67"/>
<use href="#b55" x="102" y="67"/>
<use href="#b43" x="109" y="67"/>
<use href="#b66" x="116" y="67"/>
<use href="#b49" x="123" y="67"/>
<use href="#b39" x="130" y="67"/>
<use href="#b16" x="144" y="67"/>
<use href="#b36" x="151" y="67"/>
<use href="#b55" x="158" y="67"/>
<use href="#b41" x="165" y="67"/>
<use href="#b64" x="172" y="67"/>
<use href="#r5" x="61" y="79"/>
<use href="#r59" x="67" y="79"/>
<use href="#r6" x="73" y="79"/>
<use href="#r5" x="79" y="79"/>
<use href="#r2" x="85" y="79"/>
<use href="#r4" x="91" y="79"/>
<use href="#b20" x="60" y="121"/>
<use href="#b22" x="67" y="121"/>
<use href="#b32" x="74" y="121"/>
<use href="#b30" x="88" y="121"/>
<use href="#b66" x="95" y="121"/>
<use href="#b62" x="102" y="121"/>
<use href="#b68" x="109" y="121"/>
<use href="#b39" x="116" y="121"/>
<use href="#b66" x="123" y="121"/>
<use href="#b68" x="130" y="121"/>
<use href="#b62" x="137" y="121"/>
<use href="#b36" x="144" y="121"/>
<use href="#b52" x="151" y="121"/>
<use href="#b32" x="165" y="121"/>
<use href="#b36" x="172" y="121"/>
<use href="#b62" x="179" y="121"/>
<use href="#b49" x="186" y="121"/>
<use href="#b36" x="193" y="121"/>
<use href="#b55" x="200" y="121"/>
<use href="#b66" x="207" y="121"/>
<use href="#b64" x="214" y="121"/>
<use href="#r54" x="61" y="133"/>
<use href="#r63" x="67" y="133"/>
<use href="#r69" x="73" y="133"/>
<use href="#r8" x="79" y="133"/>
<use href="#r8" x="85" y="133"/>
<use href="#r9" x="91" y="133"/>
<use href="#r3" x="97" y="133"/>
<use href="#r8" x="103" y="133"/>
<use href="#r11" x="109" y="133"/>
<use href="#r3" x="115" y="133"/>
<use href="#r0" x="127" y="133"/>
<use href="#r15" x="133" y="133"/>
<use href="#r70" x="139" y="133"/>
<use href="#r61" x="145" y="133"/>
<use href="#r63" x="151" y="133"/>
<use href="#r50" x="157" y="133"/>
<use href="#r35" x="163" y="133"/>
<use href="#r15" x="169" y="133"/>
<use href="#r48" x="175" y="133"/>
<use href="#r63" x="181" y="133"/>
<use href="#r47" x="187" y="133"/>
<use href="#r56" x="193" y="133"/>
<use href="#r58" x="199" y="133"/>
<use href="#r5" x="205" y="133"/>
<use href="#r3" x="211" y="133"/>
<use href="#r5" x="217" y="133"/>
<use href="#r5" x="223" y="133"/>
<use href="#r1" x="229" y="133"/>
<use href="#r54" x="61" y="154"/>
<use href="#r63" x="67" y="154"/>
<use href="#r69" x="73" y="154"/>
<use href="#r9" x="79" y="154"/>
<use href="#r8" x="85" y="154"/>
<use href="#r7" x="91" y="154"/>
<use href="#r11" x="97" y="154"/>
<use href="#r3" x="103" y="154"/>
<use href="#r10" x="109" y="154"/>
<use href="#r12" x="115" y="154"/>
<use href="#r0" x="127" y="154"/>
<use href="#r29" x="133" y="154"/>
<use href="#r42" x="139" y="154"/>
<use href="#r40" x="145" y="154"/>
<use href="#r51" x="151" y="154"/>
<use href="#r35" x="157" y="154"/>
<use href="#r72" x="163" y="154"/>
<use href="#r42" x="169" y="154"/>
<use href="#r38" x="175" y="154"/>
<use href="#r50" x="181" y="154"/>
<use href="#r5" x="187" y="154"/>
<use href="#r3" x="193" y="154"/>
<use href="#r5" x="199" y="154"/>
<use href="#r3" x="205" y="154"/>
<use href="#r1" x="211" y="154"/>
<use href="#r54" x="61" y="175"/>
<use href="#r63" x="67" y="175"/>
<use href="#r69" x="73" y="175"/>
<use href="#r9" x="79" y="175"/>
<use href="#r4" x="85" y="175"/>
<use href="#r6" x="91" y="175"/>
<use href="#r12" x="97" y="175"/>
<use href="#r9" x="103" y="175"/>
<use href="#r3" x="109" y="175"/>
<use href="#r12" x="115" y="175"/>
<use href="#r0" x="127" y="175"/>
<use href="#r15" x="133" y="175"/>
<use href="#r70" x="139" y="175"/>
<use href="#r61" x="145" y="175"/>
<use href="#r63" x="151" y="175"/>
<use href="#r50" x="157" y="175"/>
<use href="#r35" x="163" y="175"/>
<use href="#r15" x="169" y="175"/>
<use href="#r48" x="175" y="175"/>
<use href="#r63" x="181" y="175"/>
<use href="#r47" x="187" y="175"/>
<use href="#r56" x="193" y="175"/>
<use href="#r58" x="199" y="175"/>
<use href="#r5" x="205" y="175"/>
<use href="#r3" x="211" y="175"/>
<use href="#r5" x="217" y="175"/>
<use href="#r5" x="223" y="175"/>
<use href="#r1" x="229" y="175"/>
<use href="#r54" x="61" y="196"/>
<use href="#r63" x="67" y="196"/>
<use href="#r69" x="73" y="196"/>
<use href="#r4" x="79" y="196"/>
<use href="#r3" x="85" y="196"/>
<use href="#r3" x="91" y="196"/>
<use href="#r12" x="97" y="196"/>
<use href="#r11" x="103" y="196"/>
<use href="#r11" x="109" y="196"/>
<use href="#r5" x="115" y="196"/>
<use href="#r0" x="127" y="196"/>
<use href="#r17" x="133" y="196"/>
<use href="#r56" x="139" y="196"/>
<use href="#r42" x="145" y="196"/>
<use href="#r5" x="151" y="196"/>
<use href="#r3" x="157" y="196"/>
<use href="#r4" x="163" y="196"/>
<use href="#r7" x="169" y="196"/>
<use href="#r1" x="175" y="196"/>
<use href="#r42" x="61" y="217"/>
<use href="#r63" x="67" y="217"/>
<use href="#r69" x="73" y="217"/>
<use href="#r6" x="79" y="217"/>
<use href="#r11" x="85" y="217"/>
<use href="#r12" x="91" y="217"/>
<use href="#r6" x="97" y="217"/>
<use href="#r8" x="103" y="217"/>
<use href="#r4" x="109" y="217"/>
<use href="#r10" x="115" y="217"/>
<use href="#r0" x="127" y="217"/>
<use href="#r29" x="133" y="217"/>
<use href="#r67" x="139" y="217"/>
<use href="#r50" x="145" y="217"/>
<use href="#r65" x="151" y="217"/>
<use href="#r48" x="157" y="217"/>
<use href="#r65" x="163" y="217"/>
<use href="#r48" x="169" y="217"/>
<use href="#r58" x="175" y="217"/>
<use href="#r35" x="181" y="217"/>
<use href="#r65" x="187" y="217"/>
<use href="#r5" x="193" y="217"/>
<use href="#r3" x="199" y="217"/>
<use href="#r4" x="205" y="217"/>
<use href="#r7" x="211" y="217"/>
<use href="#r1" x="217" y="217"/>
<use href="#r54" x="61" y="238"/>
<use href="#r63" x="67" y="238"/>
<use href="#r69" x="73" y="238"/>
<use href="#r7" x="79" y="238"/>
<use href="#r3" x="85" y="238"/>
<use href="#r11" x="91" y="238"/>
<use href="#r12" x="97" y="238"/>
<use href="#r10" x="103" y="238"/>
<use href="#r9" x="109" y="238"/>
<use href="#r12" x="115" y="238"/>
<use href="#r0" x="127" y="238"/>
<use href="#r45" x="133" y="238"/>
<use href="#r54" x="139" y="238"/>
<use href="#r56" x="145" y="238"/>
<use href="#r53" x="151" y="238"/>
<use href="#r14" x="157" y="238"/>
<use href="#r19" x="163" y="238"/>
<use href="#r29" x="169" y="238"/>
<use href="#r65" x="175" y="238"/>
<use href="#r61" x="181" y="238"/>
<use href="#r67" x="187" y="238"/>
<use href="#r38" x="193" y="238"/>
<use href="#r65" x="199" y="238"/>
<use href="#r67" x="205" y="238"/>
<use href="#r61" x="211" y="238"/>
<use href="#r35" x="217" y="238"/>
<use href="#r51" x="223" y="238"/>
<use href="#r31" x="229" y="238"/>
<use href="#r35" x="235" y="238"/>
<use href="#r61" x="241" y="238"/>
<use href="#r48" x="247" y="238"/>
<use href="#r35" x="253" y="238"/>
<use href="#r54" x="259" y="238"/>
<use href="#r65" x="265" y="238"/>
<use href="#r63" x="271" y="238"/>
<use href="#r1" x="277" y="238"/>
<use href="#r42" x="61" y="259"/>
<use href="#r63" x="67" y="259"/>
<use href="#r69" x="73" y="259"/>
<use href="#r6" x="79" y="259"/>
<use href="#r8" x="85" y="259"/>
<use href="#r12" x="91" y="259"/>
<use href="#r6" x="97" y="259"/>
<use href="#r8" x="103" y="259"/>
<use href="#r10" x="109" y="259"/>
<use href="#r10" x="115" y="259"/>
<use href="#r0" x="127" y="259"/>
<use href="#r4" x="133" y="259"/>
<use href="#r3" x="139" y="259"/>
<use href="#r3" x="145" y="259"/>
<use href="#r3" x="151" y="259"/>
<use href="#r21" x="157" y="259"/>
<use href="#r42" x="163" y="259"/>
<use href="#r54" x="169" y="259"/>
<use href="#r56" x="175" y="259"/>
<use href="#r53" x="181" y="259"/>
<use href="#r42" x="187" y="259"/>
<use href="#r63" x="193" y="259"/>
<use href="#r17" x="199" y="259"/>
<use href="#r56" x="205" y="259"/>
<use href="#r54" x="211" y="259"/>
<use href="#r63" x="217" y="259"/>
<use href="#r56" x="223" y="259"/>
<use href="#r61" x="229" y="259"/>
<use href="#r65" x="235" y="259"/>
<use href="#r48" x="241" y="259"/>
<use href="#r67" x="247" y="259"/>
<use href="#r53" x="253" y="259"/>
<use href="#r27" x="259" y="259"/>
<use href="#r47" x="265" y="259"/>
<use href="#r35" x="271" y="259"/>
<use href="#r63" x="277" y="259"/>
<use href="#r42" x="283" y="259"/>
<use href="#r6" x="289" y="259"/>
<use href="#r1" x="295" y="259"/>
<use href="#r54" x="87" y="280"/>
<use href="#r63" x="93" y="280"/>
<use href="#r69" x="99" y="280"/>
<use href="#r7" x="105" y="280"/>
<use href="#r3" x="111" y="280"/>
<use href="#r10" x="117" y="280"/>
<use href="#r10" x="123" y="280"/>
<use href="#r5" x="129" y="280"/>
<use href="#r6" x="135" y="280"/>
<use href="#r12" x="141" y="280"/>
<use href="#r0" x="153" y="280"/>
<use href="#r45" x="159" y="280"/>
<use href="#r54" x="165" y="280"/>
<use href="#r56" x="171" y="280"/>
<use href="#r53" x="177" y="280"/>
<use href="#r14" x="183" y="280"/>
<use href="#r19" x="189" y="280"/>
<use href="#r29" x="195" y="280"/>
<use href="#r65" x="201" y="280"/>
<use href="#r61" x="207" y="280"/>
<use href="#r67" x="213" y="280"/>
<use href="#r38" x="219" y="280"/>
<use href="#r65" x="225" y="280"/>
<use href="#r67" x="231" y="280"/>
<use href="#r61" x="237" y="280"/>
<use href="#r35" x="243" y="280"/>
<use href="#r51" x="249" y="280"/>
<use href="#r31" x="255" y="280"/>
<use href="#r35" x="261" y="280"/>
<use href="#r61" x="267" y="280"/>
<use href="#r48" x="273" y="280"/>
<use href="#r35" x="279" y="280"/>
<use href="#r54" x="285" y="280"/>
<use href="#r65" x="291" y="280"/>
<use href="#r63" x="297" y="280"/>
<use href="#r1" x="303" y="280"/>
<use href="#r54" x="364" y="280"/>
<use href="#r63" x="370" y="280"/>
<use href="#r69" x="376" y="280"/>
<use href="#r7" x="382" y="280"/>
<use href="#r8" x="388" y="280"/>
<use href="#r8" x="394" y="280"/>
<use href="#r11" x="400" y="280"/>
<use href="#r8" x="406" y="280"/>
<use href="#r8" x="412" y="280"/>
<use href="#r9" x="418" y="280"/>
<use href="#r0" x="430" y="280"/>
<use href="#r45" x="436" y="280"/>
<use href="#r54" x="442" y="280"/>
<use href="#r56" x="448" y="280"/>
<use href="#r53" x="454" y="280"/>
<use href="#r14" x="460" y="280"/>
<use href="#r19" x="466" y="280"/>
<use href="#r29" x="472" y="280"/>
<use href="#r65" x="478" y="280"/>
<use href="#r61" x="484" y="280"/>
<use href="#r67" x="490" y="280"/>
<use href="#r38" x="496" y="280"/>
<use href="#r65" x="502" y="280"/>
<use href="#r67" x="508" y="280"/>
<use href="#r61" x="514" y="280"/>
<use href="#r35" x="520" y="280"/>
<use href="#r51" x="526" y="280"/>
<use href="#r31" x="532" y="280"/>
<use href="#r35" x="538" y="280"/>
<use href="#r61" x="544" y="280"/>
<use href="#r48" x="550" y="280"/>
<use href="#r35" x="556" y="280"/>
<use href="#r54" x="562" y="280"/>
<use href="#r65" x="568" y="280"/>
<use href="#r63" x="574" y="280"/>
<use href="#r1" x="580" y="280"/>
<use href="#r40" x="607" y="280"/>
<use href="#r45" x="613" y="280"/>
<use href="#r69" x="619" y="280"/>
<use href="#r9" x="625" y="280"/>
<use href="#r8" x="631" y="280"/>
<use href="#r11" x="637" y="280"/>
<use href="#r54" x="643" y="280"/>
<use href="#r4" x="649" y="280"/>
<use href="#r7" x="655" y="280"/>
<use href="#r8" x="661" y="280"/>
<use href="#r0" x="673" y="280"/>
<use href="#r24" x="679" y="280"/>
<use href="#r67" x="685" y="280"/>
<use href="#r5" x="691" y="280"/>
<use href="#r3" x="697" y="280"/>
<use href="#r4" x="703" y="280"/>
<use href="#r10" x="709" y="280"/>
<use href="#r1" x="715" y="280"/>
<use href="#r42" x="733" y="280"/>
<use href="#r63" x="739" y="280"/>
<use href="#r69" x="745" y="280"/>
<use href="#r6" x="751" y="280"/>
<use href="#r9" x="757" y="280"/>
<use href="#r10" x="763" y="280"/>
<use href="#r7" x="769" y="280"/>
<use href="#r8" x="775" y="280"/>
<use href="#r12" x="781" y="280"/>
<use href="#r5" x="787" y="280"/>
<use href="#r0" x="799" y="280"/>
<use href="#r15" x="805" y="280"/>
<use href="#r42" x="811" y="280"/>
<use href="#r63" x="817" y="280"/>
<use href="#r42" x="823" y="280"/>
<use href="#r54" x="829" y="280"/>
<use href="#r37" x="835" y="280"/>
<use href="#r35" x="841" y="280"/>
<use href="#r38" x="847" y="280"/>
<use href="#r47" x="853" y="280"/>
<use href="#r42" x="859" y="280"/>
<use href="#r61" x="865" y="280"/>
<use href="#r5" x="871" y="280"/>
<use href="#r3" x="877" y="280"/>
<use href="#r4" x="883" y="280"/>
<use href="#r8" x="889" y="280"/>
<use href="#r1" x="895" y="280"/>
<use href="#r54" x="243" y="301"/>
<use href="#r63" x="249" y="301"/>
<use href="#r69" x="255" y="301"/>
<use href="#r9" x="261" y="301"/>
<use href="#r5" x="267" y="301"/>
<use href="#r8" x="273" y="301"/>
<use href="#r6" x="279" y="301"/>
<use href="#r3" x="285" y="301"/>
<use href="#r8" x="291" y="301"/>
<use href="#r7" x="297" y="301"/>
<use href="#r0" x="309" y="301"/>
<use href="#r27" x="315" y="301"/>
<use href="#r61" x="321" y="301"/>
<use href="#r35" x="327" y="301"/>
<use href="#r50" x="333" y="301"/>
<use href="#r61" x="339" y="301"/>
<use href="#r48" x="345" y="301"/>
<use href="#r65" x="351" y="301"/>
<use href="#r47" x="357" y="301"/>
<use href="#r48" x="363" y="301"/>
<use href="#r5" x="369" y="301"/>
<use href="#r3" x="375" y="301"/>
<use href="#r5" x="381" y="301"/>
<use href="#r5" x="387" y="301"/>
<use href="#r1" x="393" y="301"/>
<use href="#r54" x="501" y="301"/>
<use href="#r63" x="507" y="301"/>
<use href="#r69" x="513" y="301"/>
<use href="#r7" x="519" y="301"/>
<use href="#r3" x="525" y="301"/>
<use href="#r11" x="531" y="301"/>
<use href="#r9" x="537" y="301"/>
<use href="#r4" x="543" y="301"/>
<use href="#r4" x="549" y="301"/>
<use href="#r4" x="555" y="301"/>
<use href="#r0" x="567" y="301"/>
<use href="#r45" x="573" y="301"/>
<use href="#r54" x="579" y="301"/>
<use href="#r56" x="585" y="301"/>
<use href="#r53" x="591" y="301"/>
<use href="#r14" x="597" y="301"/>
<use href="#r19" x="603" y="301"/>
<use href="#r29" x="609" y="301"/>
<use href="#r65" x="615" y="301"/>
<use href="#r61" x="621" y="301"/>
<use href="#r67" x="627" y="301"/>
<use href="#r38" x="633" y="301"/>
<use href="#r65" x="639" y="301"/>
<use href="#r67" x="645" y="301"/>
<use href="#r61" x="651" y="301"/>
<use href="#r35" x="657" y="301"/>
<use href="#r51" x="663" y="301"/>
<use href="#r31" x="669" y="301"/>
<use href="#r35" x="675" y="301"/>
<use href="#r61" x="681" y="301"/>
<use href="#r48" x="687" y="301"/>
<use href="#r35" x="693" y="301"/>
<use href="#r54" x="699" y="301"/>
<use href="#r65" x="705" y="301"/>
<use href="#r63" x="711" y="301"/>
<use href="#r1" x="717" y="301"/>
<use href="#r54" x="759" y="301"/>
<use href="#r63" x="765" y="301"/>
<use href="#r69" x="771" y="301"/>
<use href="#r9" x="777" y="301"/>
<use href="#r6" x="783" y="301"/>
<use href="#r7" x="789" y="301"/>
<use href="#r8" x="795" y="301"/>
<use href="#r12" x="801" y="301"/>
<use href="#r3" x="807" y="301"/>
<use href="#r12" x="813" y="301"/>
<use href="#r0" x="825" y="301"/>
<use href="#r29" x="831" y="301"/>
<use href="#r42" x="837" y="301"/>
<use href="#r40" x="843" y="301"/>
<use href="#r51" x="849" y="301"/>
<use href="#r35" x="855" y="301"/>
<use href="#r72" x="861" y="301"/>
<use href="#r42" x="867" y="301"/>
<use href="#r38" x="873" y="301"/>
<use href="#r50" x="879" y="301"/>
<use href="#r5" x="885" y="301"/>
<use href="#r3" x="891" y="301"/>
<use href="#r5" x="897" y="301"/>
<use href="#r3" x="903" y="301"/>
<use href="#r1" x="909" y="301"/>
<use href="#r42" x="271" y="322"/>
<use href="#r63" x="277" y="322"/>
<use href="#r69" x="283" y="322"/>
<use href="#r6" x="289" y="322"/>
<use href="#r9" x="295" y="322"/>
<use href="#r9" x="301" y="322"/>
<use href="#r6" x="307" y="322"/>
<use href="#r9" x="313" y="322"/>
<use href="#r10" x="319" y="322"/>
<use href="#r12" x="325" y="322"/>
<use href="#r0" x="337" y="322"/>
<use href="#r15" x="343" y="322"/>
<use href="#r42" x="349" y="322"/>
<use href="#r63" x="355" y="322"/>
<use href="#r42" x="361" y="322"/>
<use href="#r54" x="367" y="322"/>
<use href="#r37" x="373" y="322"/>
<use href="#r35" x="379" y="322"/>
<use href="#r38" x="385" y="322"/>
<use href="#r47" x="391" y="322"/>
<use href="#r42" x="397" y="322"/>
<use href="#r61" x="403" y="322"/>
<use href="#r5" x="409" y="322"/>
<use href="#r3" x="415" y="322"/>
<use href="#r4" x="421" y="322"/>
<use href="#r8" x="427" y="322"/>
<use href="#r1" x="433" y="322"/>
<use href="#r54" x="526" y="322"/>
<use href="#r63" x="532" y="322"/>
<use href="#r69" x="538" y="322"/>
<use href="#r8" x="544" y="322"/>
<use href="#r12" x="550" y="322"/>
<use href="#r9" x="556" y="322"/>
<use href="#r8" x="562" y="322"/>
<use href="#r11" x="568" y="322"/>
<use href="#r11" x="574" y="322"/>
<use href="#r12" x="580" y="322"/>
<use href="#r0" x="592" y="322"/>
<use href="#r14" x="598" y="322"/>
<use href="#r51" x="604" y="322"/>
<use href="#r53" x="610" y="322"/>
<use href="#r35" x="616" y="322"/>
<use href="#r61" x="622" y="322"/>
<use href="#r61" x="628" y="322"/>
<use href="#r48" x="634" y="322"/>
<use href="#r5" x="640" y="322"/>
<use href="#r3" x="646" y="322"/>
<use href="#r5" x="652" y="322"/>
<use href="#r3" x="658" y="322"/>
<use href="#r1" x="664" y="322"/>
<use href="#r54" x="694" y="322"/>
<use href="#r63" x="700" y="322"/>
<use href="#r69" x="706" y="322"/>
<use href="#r7" x="712" y="322"/>
<use href="#r3" x="718" y="322"/>
<use href="#r10" x="724" y="322"/>
<use href="#r7" x="730" y="322"/>
<use href="#r8" x="736" y="322"/>
<use href="#r10" x="742" y="322"/>
<use href="#r11" x="748" y="322"/>
<use href="#r0" x="760" y="322"/>
<use href="#r45" x="766" y="322"/>
<use href="#r54" x="772" y="322"/>
<use href="#r56" x="778" y="322"/>
<use href="#r53" x="784" y="322"/>
<use href="#r14" x="790" y="322"/>
<use href="#r19" x="796" y="322"/>
<use href="#r29" x="802" y="322"/>
<use href="#r65" x="808" y="322"/>
<use href="#r61" x="814" y="322"/>
<use href="#r67" x="820" y="322"/>
<use href="#r38" x="826" y="322"/>
<use href="#r65" x="832" y="322"/>
<use href="#r67" x="838" y="322"/>
<use href="#r61" x="844" y="322"/>
<use href="#r35" x="850" y="322"/>
<use href="#r51" x="856" y="322"/>
<use href="#r31" x="862" y="322"/>
<use href="#r35" x="868" y="322"/>
<use href="#r61" x="874" y="322"/>
<use href="#r48" x="880" y="322"/>
<use href="#r35" x="886" y="322"/>
<use href="#r54" x="892" y="322"/>
<use href="#r65" x="898" y="322"/>
<use href="#r63" x="904" y="322"/>
<use href="#r1" x="910" y="322"/>
<use href="#r54" x="526" y="343"/>
<use href="#r63" x="532" y="343"/>
<use href="#r69" x="538" y="343"/>
<use href="#r8" x="544" y="343"/>
<use href="#r6" x="550" y="343"/>
<use href="#r12" x="556" y="343"/>
<use href="#r12" x="562" y="343"/>
<use href="#r7" x="568" y="343"/>
<use href="#r10" x="574" y="343"/>
<use href="#r7" x="580" y="343"/>
<use href="#r0" x="592" y="343"/>
<use href="#r15" x="598" y="343"/>
<use href="#r70" x="604" y="343"/>
<use href="#r61" x="610" y="343"/>
<use href="#r63" x="616" y="343"/>
<use href="#r50" x="622" y="343"/>
<use href="#r35" x="628" y="343"/>
<use href="#r15" x="634" y="343"/>
<use href="#r48" x="640" y="343"/>
<use href="#r63" x="646" y="343"/>
<use href="#r47" x="652" y="343"/>
<use href="#r56" x="658" y="343"/>
<use href="#r58" x="664" y="343"/>
<use href="#r5" x="670" y="343"/>
<use href="#r3" x="676" y="343"/>
<use href="#r5" x="682" y="343"/>
<use href="#r5" x="688" y="343"/>
<use href="#r1" x="694" y="343"/>
<use href="#r54" x="708" y="343"/>
<use href="#r63" x="714" y="343"/>
<use href="#r69" x="720" y="343"/>
<use href="#r8" x="726" y="343"/>
<use href="#r11" x="732" y="343"/>
<use href="#r6" x="738" y="343"/>
<use href="#r5" x="744" y="343"/>
<use href="#r3" x="750" y="343"/>
<use href="#r7" x="756" y="343"/>
<use href="#r6" x="762" y="343"/>
<use href="#r0" x="774" y="343"/>
<use href="#r14" x="780" y="343"/>
<use href="#r51" x="786" y="343"/>
<use href="#r53" x="792" y="343"/>
<use href="#r35" x="798" y="343"/>
<use href="#r61" x="804" y="343"/>
<use href="#r61" x="810" y="343"/>
<use href="#r48" x="816" y="343"/>
<use href="#r5" x="822" y="343"/>
<use href="#r3" x="828" y="343"/>
<use href="#r5" x="834" y="343"/>
<use href="#r3" x="840" y="343"/>
<use href="#r1" x="846" y="343"/>
<use href="#r54" x="526" y="364"/>
<use href="#r63" x="532" y="364"/>
<use href="#r69" x="538" y="364"/>
<use href="#r8" x="544" y="364"/>
<use href="#r9" x="550" y="364"/>
<use href="#r11" x="556" y="364"/>
<use href="#r4" x="562" y="364"/>
<use href="#r9" x="568" y="364"/>
<use href="#r7" x="574" y="364"/>
<use href="#r6" x="580" y="364"/>
<use href="#r0" x="592" y="364"/>
<use href="#r17" x="598" y="364"/>
<use href="#r47" x="604" y="364"/>
<use href="#r67" x="610" y="364"/>
<use href="#r35" x="616" y="364"/>
<use href="#r54" x="622" y="364"/>
<use href="#r45" x="628" y="364"/>
<use href="#r5" x="634" y="364"/>
<use href="#r3" x="640" y="364"/>
<use href="#r5" x="646" y="364"/>
<use href="#r4" x="652" y="364"/>
<use href="#r1" x="658" y="364"/>
<use href="#r54" x="709" y="364"/>
<use href="#r63" x="715" y="364"/>
<use href="#r69" x="721" y="364"/>
<use href="#r8" x="727" y="364"/>
<use href="#r11" x="733" y="364"/>
<use href="#r12" x="739" y="364"/>
<use href="#r10" x="745" y="364"/>
<use href="#r8" x="751" y="364"/>
<use href="#r12" x="757" y="364"/>
<use href="#r5" x="763" y="364"/>
<use href="#r0" x="775" y="364"/>
<use href="#r14" x="781" y="364"/>
<use href="#r51" x="787" y="364"/>
<use href="#r53" x="793" y="364"/>
<use href="#r35" x="799" y="364"/>
<use href="#r61" x="805" y="364"/>
<use href="#r61" x="811" y="364"/>
<use href="#r48" x="817" y="364"/>
<use href="#r5" x="823" y="364"/>
<use href="#r3" x="829" y="364"/>
<use href="#r5" x="835" y="364"/>
<use href="#r3" x="841" y="364"/>
<use href="#r1" x="847" y="364"/>
<use href="#r54" x="526" y="385"/>
<use href="#r63" x="532" y="385"/>
<use href="#r69" x="538" y="385"/>
<use href="#r9" x="544" y="385"/>
<use href="#r5" x="550" y="385"/>
<use href="#r8" x="556" y="385"/>
<use href="#r6" x="562" y="385"/>
<use href="#r3" x="568" y="385"/>
<use href="#r8" x="574" y="385"/>
<use href="#r8" x="580" y="385"/>
<use href="#r0" x="592" y="385"/>
<use href="#r27" x="598" y="385"/>
<use href="#r61" x="604" y="385"/>
<use href="#r35" x="610" y="385"/>
<use href="#r50" x="616" y="385"/>
<use href="#r61" x="622" y="385"/>
<use href="#r48" x="628" y="385"/>
<use href="#r65" x="634" y="385"/>
<use href="#r47" x="640" y="385"/>
<use href="#r48" x="646" y="385"/>
<use href="#r5" x="652" y="385"/>
<use href="#r3" x="658" y="385"/>
<use href="#r5" x="664" y="385"/>
<use href="#r5" x="670" y="385"/>
<use href="#r1" x="676" y="385"/>
<use href="#r54" x="709" y="385"/>
<use href="#r63" x="715" y="385"/>
<use href="#r69" x="721" y="385"/>
<use href="#r7" x="727" y="385"/>
<use href="#r3" x="733" y="385"/>
<use href="#r10" x="739" y="385"/>
<use href="#r11" x="745" y="385"/>
<use href="#r3" x="751" y="385"/>
<use href="#r5" x="757" y="385"/>
<use href="#r10" x="763" y="385"/>
<use href="#r0" x="775" y="385"/>
<use href="#r45" x="781" y="385"/>
<use href="#r54" x="787" y="385"/>
<use href="#r56" x="793" y="385"/>
<use href="#r53" x="799" y="385"/>
<use href="#r14" x="805" y="385"/>
<use href="#r19" x="811" y="385"/>
<use href="#r29" x="817" y="385"/>
<use href="#r65" x="823" y="385"/>
<use href="#r61" x="829" y="385"/>
<use href="#r67" x="835" y="385"/>
<use href="#r38" x="841" y="385"/>
<use href="#r65" x="847" y="385"/>
<use href="#r67" x="853" y="385"/>
<use href="#r61" x="859" y="385"/>
<use href="#r35" x="865" y="385"/>
<use href="#r51" x="871" y="385"/>
<use href="#r31" x="877" y="385"/>
<use href="#r35" x="883" y="385"/>
<use href="#r61" x="889" y="385"/>
<use href="#r48" x="895" y="385"/>
<use href="#r35" x="901" y="385"/>
<use href="#r54" x="907" y="385"/>
<use href="#r65" x="913" y="385"/>
<use href="#r63" x="919" y="385"/>
<use href="#r1" x="925" y="385"/>
<use href="#r54" x="559" y="406"/>
<use href="#r63" x="565" y="406"/>
<use href="#r69" x="571" y="406"/>
<use href="#r9" x="577" y="406"/>
<use href="#r6" x="583" y="406"/>
<use href="#r8" x="589" y="406"/>
<use href="#r5" x="595" y="406"/>
<use href="#r6" x="601" y="406"/>
<use href="#r7" x="607" y="406"/>
<use href="#r3" x="613" y="406"/>
<use href="#r0" x="625" y="406"/>
<use href="#r29" x="631" y="406"/>
<use href="#r42" x="637" y="406"/>
<use href="#r40" x="643" y="406"/>
<use href="#r51" x="649" y="406"/>
<use href="#r35" x="655" y="406"/>
<use href="#r72" x="661" y="406"/>
<use href="#r42" x="667" y="406"/>
<use href="#r38" x="673" y="406"/>
<use href="#r50" x="679" y="406"/>
<use href="#r5" x="685" y="406"/>
<use href="#r3" x="691" y="406"/>
<use href="#r5" x="697" y="406"/>
<use href="#r3" x="703" y="406"/>
<use href="#r1" x="709" y="406"/>
<use href="#r54" x="838" y="406"/>
<use href="#r63" x="844" y="406"/>
<use href="#r69" x="850" y="406"/>
<use href="#r9" x="856" y="406"/>
<use href="#r8" x="862" y="406"/>
<use href="#r8" x="868" y="406"/>
<use href="#r4" x="874" y="406"/>
<use href="#r12" x="880" y="406"/>
<use href="#r5" x="886" y="406"/>
<use href="#r3" x="892" y="406"/>
<use href="#r0" x="904" y="406"/>
<use href="#r29" x="910" y="406"/>
<use href="#r42" x="916" y="406"/>
<use href="#r40" x="922" y="406"/>
<use href="#r51" x="928" y="406"/>
<use href="#r35" x="934" y="406"/>
<use href="#r72" x="940" y="406"/>
<use href="#r42" x="946" y="406"/>
<use href="#r38" x="952" y="406"/>
<use href="#r50" x="958" y="406"/>
<use href="#r5" x="964" y="406"/>
<use href="#r3" x="970" y="406"/>
<use href="#r5" x="976" y="406"/>
<use href="#r3" x="982" y="406"/>
<use href="#r1" x="988" y="406"/>
<use href="#r54" x="660" y="427"/>
<use href="#r63" x="666" y="427"/>
<use href="#r69" x="672" y="427"/>
<use href="#r8" x="678" y="427"/>
<use href="#r10" x="684" y="427"/>
<use href="#r5" x="690" y="427"/>
<use href="#r11" x="696" y="427"/>
<use href="#r7" x="702" y="427"/>
<use href="#r11" x="708" y="427"/>
<use href="#r12" x="714" y="427"/>
<use href="#r0" x="726" y="427"/>
<use href="#r17" x="732" y="427"/>
<use href="#r47" x="738" y="427"/>
<use href="#r67" x="744" y="427"/>
<use href="#r35" x="750" y="427"/>
<use href="#r54" x="756" y="427"/>
<use href="#r45" x="762" y="427"/>
<use href="#r5" x="768" y="427"/>
<use href="#r3" x="774" y="427"/>
<use href="#r5" x="780" y="427"/>
<use href="#r4" x="786" y="427"/>
<use href="#r1" x="792" y="427"/>
<use href="#r54" x="660" y="448"/>
<use href="#r63" x="666" y="448"/>
<use href="#r69" x="672" y="448"/>
<use href="#r9" x="678" y="448"/>
<use href="#r3" x="684" y="448"/>
<use href="#r8" x="690" y="448"/>
<use href="#r11" x="696" y="448"/>
<use href="#r9" x="702" y="448"/>
<use href="#r6" x="708" y="448"/>
<use href="#r7" x="714" y="448"/>
<use href="#r0" x="726" y="448"/>
<use href="#r33" x="732" y="448"/>
<use href="#r67" x="738" y="448"/>
<use href="#r5" x="744" y="448"/>
<use href="#r3" x="750" y="448"/>
<use href="#r5" x="756" y="448"/>
<use href="#r4" x="762" y="448"/>
<use href="#r1" x="768" y="448"/>
<use href="#r54" x="660" y="469"/>
<use href="#r63" x="666" y="469"/>
<use href="#r69" x="672" y="469"/>
<use href="#r8" x="678" y="469"/>
<use href="#r8" x="684" y="469"/>
<use href="#r9" x="690" y="469"/>
<use href="#r3" x="696" y="469"/>
<use href="#r6" x="702" y="469"/>
<use href="#r6" x="708" y="469"/>
<use href="#r5" x="714" y="469"/>
<use href="#r0" x="726" y="469"/>
<use href="#r15" x="732" y="469"/>
<use href="#r70" x="738" y="469"/>
<use href="#r61" x="744" y="469"/>
<use href="#r63" x="750" y="469"/>
<use href="#r50" x="756" y="469"/>
<use href="#r35" x="762" y="469"/>
<use href="#r15" x="768" y="469"/>
<use href="#r48" x="774" y="469"/>
<use href="#r63" x="780" y="469"/>
<use href="#r47" x="786" y="469"/>
<use href="#r56" x="792" y="469"/>
<use href="#r58" x="798" y="469"/>
<use href="#r5" x="804" y="469"/>
<use href="#r3" x="810" y="469"/>
<use href="#r5" x="816" y="469"/>
<use href="#r5" x="822" y="469"/>
<use href="#r1" x="828" y="469"/>
<use href="#b28" x="60" y="525"/>
<use href="#b43" x="67" y="525"/>
<use href="#b44" x="74" y="525"/>
<use href="#b30" x="81" y="525"/>
<use href="#b43" x="88" y="525"/>
<use href="#b60" x="95" y="525"/>
<use href="#b22" x="109" y="525"/>
<use href="#b43" x="116" y="525"/>
<use href="#b55" x="123" y="525"/>
<use href="#b43" x="130" y="525"/>
<use href="#b64" x="137" y="525"/>
<use href="#r26" x="61" y="537"/>
<use href="#r17" x="67" y="537"/>
<use href="#r23" x="73" y="537"/>
<use href="#r14" x="79" y="537"/>
<use href="#r27" x="85" y="537"/>
<use href="#r4" x="91" y="537"/>
<use href="#r73" x="97" y="537"/>
<use href="#r26" x="103" y="537"/>
<use href="#r25" x="109" y="537"/>
<use href="#r34" x="115" y="537"/>
<use href="#r5" x="121" y="537"/>
<use href="#r3" x="127" y="537"/>
<use href="#r8" x="133" y="537"/>
<use href="#r11" x="139" y="537"/>
<use href="#r7" x="145" y="537"/>
<use href="#r5" x="151" y="537"/>
<use href="#r26" x="61" y="562"/>
<use href="#r17" x="67" y="562"/>
<use href="#r23" x="73" y="562"/>
<use href="#r14" x="79" y="562"/>
<use href="#r27" x="85" y="562"/>
<use href="#r4" x="91" y="562"/>
<use href="#r73" x="97" y="562"/>
<use href="#r26" x="103" y="562"/>
<use href="#r25" x="109" y="562"/>
<use href="#r34" x="115" y="562"/>
<use href="#r3" x="121" y="562"/>
<use href="#r4" x="127" y="562"/>
<use href="#r6" x="133" y="562"/>
<use href="#r7" x="139" y="562"/>
<use href="#r6" x="145" y="562"/>
<use href="#r9" x="151" y="562"/>
</g>
</svg></body></html>
